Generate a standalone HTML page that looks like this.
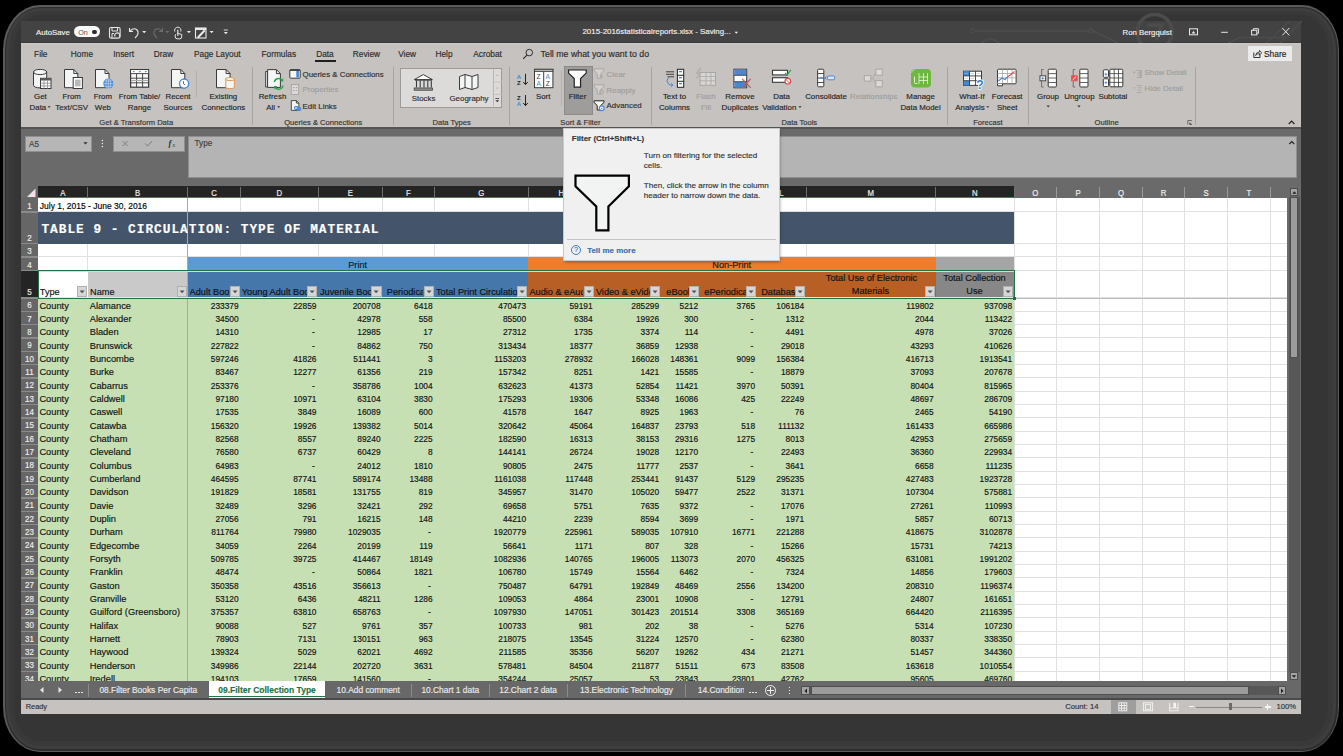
<!DOCTYPE html><html><head><meta charset="utf-8"><style>
html,body{margin:0;padding:0;width:1343px;height:756px;overflow:hidden;background:#000;}
.t{position:absolute;white-space:nowrap;line-height:1;-webkit-text-stroke:0.15px currentColor;}
.r{position:absolute;}
svg.r{overflow:visible}
</style></head><body>
<div class="r" style="left:3px;top:5px;width:1336px;height:747px;border-radius:37px/45px;background:#5a5a5a;"></div>
<div class="r" style="left:4.5px;top:6.5px;width:1333px;height:744px;border-radius:35.5px/43.5px;background:#2e2e2e;"></div>
<div class="r" style="left:6px;top:8px;width:1330px;height:741px;border-radius:34px/42px;background:#3e3e3e;"></div>
<div class="r" style="left:9px;top:11px;width:1324px;height:735px;border-radius:31px/39px;background:#393939;"></div>
<div class="r" style="left:14px;top:15px;width:1314px;height:726px;border-radius:26px/34px;background:#353535;"></div>
<div class="r" style="left:21.00px;top:21.00px;width:1280.00px;height:22.00px;background:#434343;"></div>
<div class="r" style="left:21.00px;top:42.00px;width:1280.00px;height:1.00px;background:#3a3a3a;"></div>
<div class="r" style="left:21.00px;top:43.00px;width:1280.00px;height:85.00px;background:#c5c2bf;"></div>
<div class="r" style="left:21.00px;top:43.00px;width:1280.00px;height:1.00px;background:#ccc9c6;"></div>
<svg class="r" style="left:0;top:0;overflow:hidden" width="1343" height="43" viewBox="0 0 1343 43"><g fill="none" stroke="#4c4c4c" stroke-width="1.4"><path d="M974.5 31 H1089"/><circle cx="972.5" cy="31" r="2"/><circle cx="1091" cy="31" r="2"/><path d="M1093 31 L1118 43"/><circle cx="1154.7" cy="32" r="17.5" stroke-width="3.6"/><path d="M1147 25 h15 l-6 15" stroke-width="3.5"/><path d="M1228 43 L1240 37.5 H1290"/><path d="M1266 43 L1290 21"/><path d="M1280 43 L1302 21"/><circle cx="990" cy="50" r="11"/></g></svg>
<div class="t" style="top:28.50px;font-size:7.8px;color:#f2f2f2;font-weight:normal;font-family:'Liberation Sans', sans-serif;left:36.00px;">AutoSave</div>
<div class="r" style="left:74px;top:26px;width:26px;height:11px;border-radius:6px;background:#fafafa;"></div>
<div class="t" style="top:28.51px;font-size:7.2px;color:#555;font-weight:normal;font-family:'Liberation Sans', sans-serif;left:78.20px;-webkit-text-stroke:0;">On</div>
<div class="r" style="left:91.9px;top:29.6px;width:4.8px;height:4.8px;border-radius:50%;background:#2a2a2a;"></div>
<div class="t" style="top:28.21px;font-size:7.9px;color:#f0f0f0;font-weight:normal;font-family:'Liberation Sans', sans-serif;left:506.60px;width:300px;text-align:center;">2015-2016statisticalreports.xlsx  -  Saving...</div>
<div class="t" style="top:28.60px;font-size:7.8px;color:#f0f0f0;font-weight:normal;font-family:'Liberation Sans', sans-serif;left:1122.50px;">Ron Bergquist</div>
<div class="t" style="top:49.77px;font-size:8.3px;color:#2b2b2b;font-weight:normal;font-family:'Liberation Sans', sans-serif;left:0.75px;width:80px;text-align:center;">File</div>
<div class="t" style="top:49.77px;font-size:8.3px;color:#2b2b2b;font-weight:normal;font-family:'Liberation Sans', sans-serif;left:41.95px;width:80px;text-align:center;">Home</div>
<div class="t" style="top:49.77px;font-size:8.3px;color:#2b2b2b;font-weight:normal;font-family:'Liberation Sans', sans-serif;left:83.65px;width:80px;text-align:center;">Insert</div>
<div class="t" style="top:49.77px;font-size:8.3px;color:#2b2b2b;font-weight:normal;font-family:'Liberation Sans', sans-serif;left:123.55px;width:80px;text-align:center;">Draw</div>
<div class="t" style="top:49.77px;font-size:8.3px;color:#2b2b2b;font-weight:normal;font-family:'Liberation Sans', sans-serif;left:177.30px;width:80px;text-align:center;">Page Layout</div>
<div class="t" style="top:49.77px;font-size:8.3px;color:#2b2b2b;font-weight:normal;font-family:'Liberation Sans', sans-serif;left:238.75px;width:80px;text-align:center;">Formulas</div>
<div class="t" style="top:49.77px;font-size:8.3px;color:#2b2b2b;font-weight:normal;font-family:'Liberation Sans', sans-serif;left:284.95px;width:80px;text-align:center;">Data</div>
<div class="t" style="top:49.77px;font-size:8.3px;color:#2b2b2b;font-weight:normal;font-family:'Liberation Sans', sans-serif;left:326.40px;width:80px;text-align:center;">Review</div>
<div class="t" style="top:49.77px;font-size:8.3px;color:#2b2b2b;font-weight:normal;font-family:'Liberation Sans', sans-serif;left:367.15px;width:80px;text-align:center;">View</div>
<div class="t" style="top:49.77px;font-size:8.3px;color:#2b2b2b;font-weight:normal;font-family:'Liberation Sans', sans-serif;left:404.05px;width:80px;text-align:center;">Help</div>
<div class="t" style="top:49.77px;font-size:8.3px;color:#2b2b2b;font-weight:normal;font-family:'Liberation Sans', sans-serif;left:447.60px;width:80px;text-align:center;">Acrobat</div>
<div class="r" style="left:314.50px;top:60.20px;width:21.00px;height:1.80px;background:#1f1f1f;"></div>
<div class="t" style="top:50.15px;font-size:8.8px;color:#2b2b2b;font-weight:normal;font-family:'Liberation Sans', sans-serif;left:540.60px;">Tell me what you want to do</div>
<div class="r" style="left:1248.00px;top:46.30px;width:44.00px;height:14.70px;background:#ebebeb;"></div>
<div class="t" style="top:50.09px;font-size:8.4px;color:#222;font-weight:normal;font-family:'Liberation Sans', sans-serif;left:1264.00px;">Share</div>
<div class="t" style="top:118.87px;font-size:7.6px;color:#333;font-weight:normal;font-family:'Liberation Sans', sans-serif;left:76.25px;width:120px;text-align:center;">Get &amp; Transform Data</div>
<div class="t" style="top:118.87px;font-size:7.6px;color:#333;font-weight:normal;font-family:'Liberation Sans', sans-serif;left:263.25px;width:120px;text-align:center;">Queries &amp; Connections</div>
<div class="t" style="top:118.87px;font-size:7.6px;color:#333;font-weight:normal;font-family:'Liberation Sans', sans-serif;left:391.65px;width:120px;text-align:center;">Data Types</div>
<div class="t" style="top:118.87px;font-size:7.6px;color:#333;font-weight:normal;font-family:'Liberation Sans', sans-serif;left:520.40px;width:120px;text-align:center;">Sort &amp; Filter</div>
<div class="t" style="top:118.87px;font-size:7.6px;color:#333;font-weight:normal;font-family:'Liberation Sans', sans-serif;left:739.30px;width:120px;text-align:center;">Data Tools</div>
<div class="t" style="top:118.87px;font-size:7.6px;color:#333;font-weight:normal;font-family:'Liberation Sans', sans-serif;left:927.95px;width:120px;text-align:center;">Forecast</div>
<div class="t" style="top:118.87px;font-size:7.6px;color:#333;font-weight:normal;font-family:'Liberation Sans', sans-serif;left:1046.60px;width:120px;text-align:center;">Outline</div>
<div class="r" style="left:251.80px;top:66.50px;width:1.00px;height:58.00px;background:#a8a5a2;"></div>
<div class="r" style="left:393.30px;top:66.50px;width:1.00px;height:58.00px;background:#a8a5a2;"></div>
<div class="r" style="left:508.90px;top:66.50px;width:1.00px;height:58.00px;background:#a8a5a2;"></div>
<div class="r" style="left:650.80px;top:66.50px;width:1.00px;height:58.00px;background:#a8a5a2;"></div>
<div class="r" style="left:947.20px;top:66.50px;width:1.00px;height:58.00px;background:#a8a5a2;"></div>
<div class="r" style="left:1027.90px;top:66.50px;width:1.00px;height:58.00px;background:#a8a5a2;"></div>
<div class="r" style="left:1195.00px;top:66.50px;width:1.00px;height:58.00px;background:#a8a5a2;"></div>
<div class="r" style="left:196.10px;top:70.70px;width:1.00px;height:26.80px;background:#b3b0ad;"></div>
<div class="r" style="left:560.50px;top:71.00px;width:1.00px;height:35.00px;background:#b3b0ad;"></div>
<div class="t" style="top:92.91px;font-size:7.9px;color:#262626;font-weight:normal;font-family:'Liberation Sans', sans-serif;left:0.40px;width:80px;text-align:center;">Get</div>
<div class="t" style="top:103.61px;font-size:7.9px;color:#262626;font-weight:normal;font-family:'Liberation Sans', sans-serif;left:-2.10px;width:80px;text-align:center;">Data</div>
<div class="t" style="top:92.91px;font-size:7.9px;color:#262626;font-weight:normal;font-family:'Liberation Sans', sans-serif;left:31.70px;width:80px;text-align:center;">From</div>
<div class="t" style="top:103.61px;font-size:7.9px;color:#262626;font-weight:normal;font-family:'Liberation Sans', sans-serif;left:31.70px;width:80px;text-align:center;">Text/CSV</div>
<div class="t" style="top:92.91px;font-size:7.9px;color:#262626;font-weight:normal;font-family:'Liberation Sans', sans-serif;left:62.90px;width:80px;text-align:center;">From</div>
<div class="t" style="top:103.61px;font-size:7.9px;color:#262626;font-weight:normal;font-family:'Liberation Sans', sans-serif;left:62.90px;width:80px;text-align:center;">Web</div>
<div class="t" style="top:92.91px;font-size:7.9px;color:#262626;font-weight:normal;font-family:'Liberation Sans', sans-serif;left:99.50px;width:80px;text-align:center;">From Table/</div>
<div class="t" style="top:103.61px;font-size:7.9px;color:#262626;font-weight:normal;font-family:'Liberation Sans', sans-serif;left:99.50px;width:80px;text-align:center;">Range</div>
<div class="t" style="top:92.91px;font-size:7.9px;color:#262626;font-weight:normal;font-family:'Liberation Sans', sans-serif;left:138.00px;width:80px;text-align:center;">Recent</div>
<div class="t" style="top:103.61px;font-size:7.9px;color:#262626;font-weight:normal;font-family:'Liberation Sans', sans-serif;left:138.00px;width:80px;text-align:center;">Sources</div>
<div class="t" style="top:92.91px;font-size:7.9px;color:#262626;font-weight:normal;font-family:'Liberation Sans', sans-serif;left:183.40px;width:80px;text-align:center;">Existing</div>
<div class="t" style="top:103.61px;font-size:7.9px;color:#262626;font-weight:normal;font-family:'Liberation Sans', sans-serif;left:183.40px;width:80px;text-align:center;">Connections</div>
<div class="t" style="top:92.91px;font-size:7.9px;color:#262626;font-weight:normal;font-family:'Liberation Sans', sans-serif;left:232.50px;width:80px;text-align:center;">Refresh</div>
<div class="t" style="top:103.61px;font-size:7.9px;color:#262626;font-weight:normal;font-family:'Liberation Sans', sans-serif;left:230.60px;width:80px;text-align:center;">All</div>
<div class="t" style="top:70.71px;font-size:7.9px;color:#2e2e2e;font-weight:normal;font-family:'Liberation Sans', sans-serif;left:302.50px;">Queries &amp; Connections</div>
<div class="t" style="top:86.41px;font-size:7.9px;color:#a09e9c;font-weight:normal;font-family:'Liberation Sans', sans-serif;left:302.50px;">Properties</div>
<div class="t" style="top:102.81px;font-size:7.9px;color:#2e2e2e;font-weight:normal;font-family:'Liberation Sans', sans-serif;left:302.50px;">Edit Links</div>
<div class="r" style="left:400px;top:67.7px;width:100px;height:38.7px;background:#dcdbda;border:1px solid #9c9a98;"></div>
<div class="r" style="left:492.50px;top:68.70px;width:1.00px;height:37.70px;background:#b9b7b5;"></div>
<div class="t" style="top:95.21px;font-size:7.9px;color:#2e2e2e;font-weight:normal;font-family:'Liberation Sans', sans-serif;left:393.60px;width:60px;text-align:center;">Stocks</div>
<div class="t" style="top:95.21px;font-size:7.9px;color:#2e2e2e;font-weight:normal;font-family:'Liberation Sans', sans-serif;left:439.00px;width:60px;text-align:center;">Geography</div>
<div class="t" style="top:92.91px;font-size:7.9px;color:#262626;font-weight:normal;font-family:'Liberation Sans', sans-serif;left:503.20px;width:80px;text-align:center;">Sort</div>
<div class="r" style="left:563.7px;top:65.6px;width:27.2px;height:47.7px;background:#9f9d9b;border:1px solid #8d8b89;"></div>
<div class="t" style="top:92.91px;font-size:7.9px;color:#262626;font-weight:normal;font-family:'Liberation Sans', sans-serif;left:537.50px;width:80px;text-align:center;">Filter</div>
<div class="t" style="top:70.71px;font-size:7.9px;color:#a09e9c;font-weight:normal;font-family:'Liberation Sans', sans-serif;left:606.60px;">Clear</div>
<div class="t" style="top:86.71px;font-size:7.9px;color:#a09e9c;font-weight:normal;font-family:'Liberation Sans', sans-serif;left:606.60px;">Reapply</div>
<div class="t" style="top:102.41px;font-size:7.9px;color:#2e2e2e;font-weight:normal;font-family:'Liberation Sans', sans-serif;left:606.60px;">Advanced</div>
<div class="t" style="top:92.91px;font-size:7.9px;color:#262626;font-weight:normal;font-family:'Liberation Sans', sans-serif;left:634.50px;width:80px;text-align:center;">Text to</div>
<div class="t" style="top:103.61px;font-size:7.9px;color:#262626;font-weight:normal;font-family:'Liberation Sans', sans-serif;left:634.50px;width:80px;text-align:center;">Columns</div>
<div class="t" style="top:92.91px;font-size:7.9px;color:#a09e9c;font-weight:normal;font-family:'Liberation Sans', sans-serif;left:666.00px;width:80px;text-align:center;">Flash</div>
<div class="t" style="top:103.61px;font-size:7.9px;color:#a09e9c;font-weight:normal;font-family:'Liberation Sans', sans-serif;left:666.00px;width:80px;text-align:center;">Fill</div>
<div class="t" style="top:92.91px;font-size:7.9px;color:#262626;font-weight:normal;font-family:'Liberation Sans', sans-serif;left:700.00px;width:80px;text-align:center;">Remove</div>
<div class="t" style="top:103.61px;font-size:7.9px;color:#262626;font-weight:normal;font-family:'Liberation Sans', sans-serif;left:700.00px;width:80px;text-align:center;">Duplicates</div>
<div class="t" style="top:92.91px;font-size:7.9px;color:#262626;font-weight:normal;font-family:'Liberation Sans', sans-serif;left:741.60px;width:80px;text-align:center;">Data</div>
<div class="t" style="top:103.61px;font-size:7.9px;color:#262626;font-weight:normal;font-family:'Liberation Sans', sans-serif;left:739.30px;width:80px;text-align:center;">Validation</div>
<div class="t" style="top:92.91px;font-size:7.9px;color:#262626;font-weight:normal;font-family:'Liberation Sans', sans-serif;left:786.00px;width:80px;text-align:center;">Consolidate</div>
<div class="t" style="top:92.91px;font-size:7.9px;color:#a09e9c;font-weight:normal;font-family:'Liberation Sans', sans-serif;left:833.80px;width:80px;text-align:center;">Relationships</div>
<div class="t" style="top:92.91px;font-size:7.9px;color:#262626;font-weight:normal;font-family:'Liberation Sans', sans-serif;left:880.60px;width:80px;text-align:center;">Manage</div>
<div class="t" style="top:103.61px;font-size:7.9px;color:#262626;font-weight:normal;font-family:'Liberation Sans', sans-serif;left:880.60px;width:80px;text-align:center;">Data Model</div>
<div class="t" style="top:92.91px;font-size:7.9px;color:#262626;font-weight:normal;font-family:'Liberation Sans', sans-serif;left:932.00px;width:80px;text-align:center;">What-If</div>
<div class="t" style="top:103.61px;font-size:7.9px;color:#262626;font-weight:normal;font-family:'Liberation Sans', sans-serif;left:930.00px;width:80px;text-align:center;">Analysis</div>
<div class="t" style="top:92.91px;font-size:7.9px;color:#262626;font-weight:normal;font-family:'Liberation Sans', sans-serif;left:967.20px;width:80px;text-align:center;">Forecast</div>
<div class="t" style="top:103.61px;font-size:7.9px;color:#262626;font-weight:normal;font-family:'Liberation Sans', sans-serif;left:967.20px;width:80px;text-align:center;">Sheet</div>
<div class="t" style="top:92.91px;font-size:7.9px;color:#262626;font-weight:normal;font-family:'Liberation Sans', sans-serif;left:1008.00px;width:80px;text-align:center;">Group</div>
<div class="t" style="top:92.91px;font-size:7.9px;color:#262626;font-weight:normal;font-family:'Liberation Sans', sans-serif;left:1039.40px;width:80px;text-align:center;">Ungroup</div>
<div class="t" style="top:92.91px;font-size:7.9px;color:#262626;font-weight:normal;font-family:'Liberation Sans', sans-serif;left:1072.90px;width:80px;text-align:center;">Subtotal</div>
<div class="t" style="top:69.41px;font-size:7.9px;color:#a09e9c;font-weight:normal;font-family:'Liberation Sans', sans-serif;left:1144.50px;">Show Detail</div>
<div class="t" style="top:84.81px;font-size:7.9px;color:#a09e9c;font-weight:normal;font-family:'Liberation Sans', sans-serif;left:1144.50px;">Hide Detail</div>
<div class="r" style="left:21.00px;top:128.00px;width:1280.00px;height:58.00px;background:#6a6a6a;"></div>
<div class="r" style="left:21.00px;top:127.40px;width:1280.00px;height:1.60px;background:#555;"></div>
<div class="r" style="left:24.7px;top:135.8px;width:67.3px;height:16.4px;background:#b6b6b6;box-sizing:border-box;border:1px solid #8f8f8f;"></div>
<div class="t" style="top:140.86px;font-size:8.2px;color:#404040;font-weight:normal;font-family:'Liberation Sans', sans-serif;left:29.00px;">A5</div>
<div class="r" style="left:112.5px;top:135.8px;width:72.6px;height:16.4px;background:#b6b6b6;box-sizing:border-box;border:1px solid #8f8f8f;"></div>
<div class="r" style="left:188.2px;top:135.8px;width:1109.2px;height:42.6px;background:#b4b4b4;box-sizing:border-box;border:1px solid #8f8f8f;"></div>
<div class="t" style="top:140.26px;font-size:8.2px;color:#404040;font-weight:normal;font-family:'Liberation Sans', sans-serif;left:194.50px;">Type</div>
<div class="r" style="left:21.00px;top:186.00px;width:1265.50px;height:12.00px;background:#6a6a6a;"></div>
<div class="r" style="left:21.00px;top:186.00px;width:17.00px;height:12.00px;background:#6a6a6a;"></div>
<svg class="r" style="left:23px;top:187px;" width="14" height="11" viewBox="0 0 14 11"><path d="M12.5 1.5 L12.5 10 L4 10 Z" fill="#e6e6e6"/></svg>
<div class="r" style="left:38.00px;top:186.00px;width:976.00px;height:12.00px;background:#242424;"></div>
<div class="t" style="top:189.60px;font-size:7.8px;color:#f0f0f0;font-weight:normal;font-family:'Liberation Sans', sans-serif;left:42.75px;width:40px;text-align:center;transform:scaleY(1.2);transform-origin:50% 6.6px;">A</div>
<div class="r" style="left:87.00px;top:187.00px;width:1.00px;height:11.00px;background:#6f6f6f;"></div>
<div class="t" style="top:189.60px;font-size:7.8px;color:#f0f0f0;font-weight:normal;font-family:'Liberation Sans', sans-serif;left:117.50px;width:40px;text-align:center;transform:scaleY(1.2);transform-origin:50% 6.6px;">B</div>
<div class="r" style="left:187.00px;top:187.00px;width:1.00px;height:11.00px;background:#6f6f6f;"></div>
<div class="t" style="top:189.60px;font-size:7.8px;color:#f0f0f0;font-weight:normal;font-family:'Liberation Sans', sans-serif;left:194.00px;width:40px;text-align:center;transform:scaleY(1.2);transform-origin:50% 6.6px;">C</div>
<div class="r" style="left:240.00px;top:187.00px;width:1.00px;height:11.00px;background:#6f6f6f;"></div>
<div class="t" style="top:189.60px;font-size:7.8px;color:#f0f0f0;font-weight:normal;font-family:'Liberation Sans', sans-serif;left:259.40px;width:40px;text-align:center;transform:scaleY(1.2);transform-origin:50% 6.6px;">D</div>
<div class="r" style="left:317.80px;top:187.00px;width:1.00px;height:11.00px;background:#6f6f6f;"></div>
<div class="t" style="top:189.60px;font-size:7.8px;color:#f0f0f0;font-weight:normal;font-family:'Liberation Sans', sans-serif;left:330.35px;width:40px;text-align:center;transform:scaleY(1.2);transform-origin:50% 6.6px;">E</div>
<div class="r" style="left:381.90px;top:187.00px;width:1.00px;height:11.00px;background:#6f6f6f;"></div>
<div class="t" style="top:189.60px;font-size:7.8px;color:#f0f0f0;font-weight:normal;font-family:'Liberation Sans', sans-serif;left:388.45px;width:40px;text-align:center;transform:scaleY(1.2);transform-origin:50% 6.6px;">F</div>
<div class="r" style="left:434.00px;top:187.00px;width:1.00px;height:11.00px;background:#6f6f6f;"></div>
<div class="t" style="top:189.60px;font-size:7.8px;color:#f0f0f0;font-weight:normal;font-family:'Liberation Sans', sans-serif;left:461.25px;width:40px;text-align:center;transform:scaleY(1.2);transform-origin:50% 6.6px;">G</div>
<div class="r" style="left:527.50px;top:187.00px;width:1.00px;height:11.00px;background:#6f6f6f;"></div>
<div class="t" style="top:189.60px;font-size:7.8px;color:#f0f0f0;font-weight:normal;font-family:'Liberation Sans', sans-serif;left:541.25px;width:40px;text-align:center;transform:scaleY(1.2);transform-origin:50% 6.6px;">H</div>
<div class="r" style="left:594.00px;top:187.00px;width:1.00px;height:11.00px;background:#6f6f6f;"></div>
<div class="t" style="top:189.60px;font-size:7.8px;color:#f0f0f0;font-weight:normal;font-family:'Liberation Sans', sans-serif;left:607.75px;width:40px;text-align:center;transform:scaleY(1.2);transform-origin:50% 6.6px;">I</div>
<div class="r" style="left:660.50px;top:187.00px;width:1.00px;height:11.00px;background:#6f6f6f;"></div>
<div class="t" style="top:189.60px;font-size:7.8px;color:#f0f0f0;font-weight:normal;font-family:'Liberation Sans', sans-serif;left:660.50px;width:40px;text-align:center;transform:scaleY(1.2);transform-origin:50% 6.6px;">J</div>
<div class="r" style="left:699.50px;top:187.00px;width:1.00px;height:11.00px;background:#6f6f6f;"></div>
<div class="t" style="top:189.60px;font-size:7.8px;color:#f0f0f0;font-weight:normal;font-family:'Liberation Sans', sans-serif;left:708.50px;width:40px;text-align:center;transform:scaleY(1.2);transform-origin:50% 6.6px;">K</div>
<div class="r" style="left:756.50px;top:187.00px;width:1.00px;height:11.00px;background:#6f6f6f;"></div>
<div class="t" style="top:189.60px;font-size:7.8px;color:#f0f0f0;font-weight:normal;font-family:'Liberation Sans', sans-serif;left:761.50px;width:40px;text-align:center;transform:scaleY(1.2);transform-origin:50% 6.6px;">L</div>
<div class="r" style="left:805.50px;top:187.00px;width:1.00px;height:11.00px;background:#6f6f6f;"></div>
<div class="t" style="top:189.60px;font-size:7.8px;color:#f0f0f0;font-weight:normal;font-family:'Liberation Sans', sans-serif;left:850.75px;width:40px;text-align:center;transform:scaleY(1.2);transform-origin:50% 6.6px;">M</div>
<div class="r" style="left:935.00px;top:187.00px;width:1.00px;height:11.00px;background:#6f6f6f;"></div>
<div class="t" style="top:189.60px;font-size:7.8px;color:#f0f0f0;font-weight:normal;font-family:'Liberation Sans', sans-serif;left:954.75px;width:40px;text-align:center;transform:scaleY(1.2);transform-origin:50% 6.6px;">N</div>
<div class="r" style="left:1013.50px;top:187.00px;width:1.00px;height:11.00px;background:#6f6f6f;"></div>
<div class="t" style="top:189.60px;font-size:7.8px;color:#f0f0f0;font-weight:normal;font-family:'Liberation Sans', sans-serif;left:1015.25px;width:40px;text-align:center;transform:scaleY(1.2);transform-origin:50% 6.6px;">O</div>
<div class="r" style="left:1056.00px;top:187.00px;width:1.00px;height:11.00px;background:#9a9a9a;"></div>
<div class="t" style="top:189.60px;font-size:7.8px;color:#f0f0f0;font-weight:normal;font-family:'Liberation Sans', sans-serif;left:1058.15px;width:40px;text-align:center;transform:scaleY(1.2);transform-origin:50% 6.6px;">P</div>
<div class="r" style="left:1099.30px;top:187.00px;width:1.00px;height:11.00px;background:#9a9a9a;"></div>
<div class="t" style="top:189.60px;font-size:7.8px;color:#f0f0f0;font-weight:normal;font-family:'Liberation Sans', sans-serif;left:1101.10px;width:40px;text-align:center;transform:scaleY(1.2);transform-origin:50% 6.6px;">Q</div>
<div class="r" style="left:1141.90px;top:187.00px;width:1.00px;height:11.00px;background:#9a9a9a;"></div>
<div class="t" style="top:189.60px;font-size:7.8px;color:#f0f0f0;font-weight:normal;font-family:'Liberation Sans', sans-serif;left:1143.50px;width:40px;text-align:center;transform:scaleY(1.2);transform-origin:50% 6.6px;">R</div>
<div class="r" style="left:1184.10px;top:187.00px;width:1.00px;height:11.00px;background:#9a9a9a;"></div>
<div class="t" style="top:189.60px;font-size:7.8px;color:#f0f0f0;font-weight:normal;font-family:'Liberation Sans', sans-serif;left:1186.05px;width:40px;text-align:center;transform:scaleY(1.2);transform-origin:50% 6.6px;">S</div>
<div class="r" style="left:1227.00px;top:187.00px;width:1.00px;height:11.00px;background:#9a9a9a;"></div>
<div class="t" style="top:189.60px;font-size:7.8px;color:#f0f0f0;font-weight:normal;font-family:'Liberation Sans', sans-serif;left:1228.90px;width:40px;text-align:center;transform:scaleY(1.2);transform-origin:50% 6.6px;">T</div>
<div class="r" style="left:1269.80px;top:187.00px;width:1.00px;height:11.00px;background:#9a9a9a;"></div>
<div class="t" style="top:189.60px;font-size:7.8px;color:#f0f0f0;font-weight:normal;font-family:'Liberation Sans', sans-serif;left:1271.65px;width:40px;text-align:center;transform:scaleY(1.2);transform-origin:50% 6.6px;">U</div>
<div class="r" style="left:38.00px;top:197.00px;width:976.00px;height:1.60px;background:#2e8b57;"></div>
<div class="r" style="left:21.00px;top:198.00px;width:17.00px;height:483.00px;background:#666666;"></div>
<div class="r" style="left:21.00px;top:211.40px;width:16.50px;height:1.20px;background:#8a8a8a;"></div>
<div class="t" style="top:203.03px;font-size:8px;color:#ececec;font-weight:normal;font-family:'Liberation Sans', sans-serif;left:19.50px;width:20px;text-align:center;transform:scaleY(1.2);transform-origin:50% 6.8px;">1</div>
<div class="r" style="left:21.00px;top:243.00px;width:16.50px;height:1.20px;background:#8a8a8a;"></div>
<div class="t" style="top:234.63px;font-size:8px;color:#ececec;font-weight:normal;font-family:'Liberation Sans', sans-serif;left:19.50px;width:20px;text-align:center;transform:scaleY(1.2);transform-origin:50% 6.8px;">2</div>
<div class="r" style="left:21.00px;top:256.40px;width:16.50px;height:1.20px;background:#8a8a8a;"></div>
<div class="t" style="top:248.03px;font-size:8px;color:#ececec;font-weight:normal;font-family:'Liberation Sans', sans-serif;left:19.50px;width:20px;text-align:center;transform:scaleY(1.2);transform-origin:50% 6.8px;">3</div>
<div class="r" style="left:21.00px;top:270.00px;width:16.50px;height:1.20px;background:#8a8a8a;"></div>
<div class="t" style="top:261.63px;font-size:8px;color:#ececec;font-weight:normal;font-family:'Liberation Sans', sans-serif;left:19.50px;width:20px;text-align:center;transform:scaleY(1.2);transform-origin:50% 6.8px;">4</div>
<div class="r" style="left:21.00px;top:270.60px;width:16.50px;height:27.40px;background:#242424;"></div>
<div class="r" style="left:21.00px;top:297.40px;width:16.50px;height:1.20px;background:#8a8a8a;"></div>
<div class="t" style="top:289.03px;font-size:8px;color:#ececec;font-weight:normal;font-family:'Liberation Sans', sans-serif;left:19.50px;width:20px;text-align:center;transform:scaleY(1.2);transform-origin:50% 6.8px;">5</div>
<div class="r" style="left:21.00px;top:310.73px;width:16.50px;height:1.20px;background:#8a8a8a;"></div>
<div class="t" style="top:302.36px;font-size:8px;color:#ececec;font-weight:normal;font-family:'Liberation Sans', sans-serif;left:19.50px;width:20px;text-align:center;transform:scaleY(1.2);transform-origin:50% 6.8px;">6</div>
<div class="r" style="left:21.00px;top:324.07px;width:16.50px;height:1.20px;background:#8a8a8a;"></div>
<div class="t" style="top:315.69px;font-size:8px;color:#ececec;font-weight:normal;font-family:'Liberation Sans', sans-serif;left:19.50px;width:20px;text-align:center;transform:scaleY(1.2);transform-origin:50% 6.8px;">7</div>
<div class="r" style="left:21.00px;top:337.40px;width:16.50px;height:1.20px;background:#8a8a8a;"></div>
<div class="t" style="top:329.03px;font-size:8px;color:#ececec;font-weight:normal;font-family:'Liberation Sans', sans-serif;left:19.50px;width:20px;text-align:center;transform:scaleY(1.2);transform-origin:50% 6.8px;">8</div>
<div class="r" style="left:21.00px;top:350.73px;width:16.50px;height:1.20px;background:#8a8a8a;"></div>
<div class="t" style="top:342.36px;font-size:8px;color:#ececec;font-weight:normal;font-family:'Liberation Sans', sans-serif;left:19.50px;width:20px;text-align:center;transform:scaleY(1.2);transform-origin:50% 6.8px;">9</div>
<div class="r" style="left:21.00px;top:364.06px;width:16.50px;height:1.20px;background:#8a8a8a;"></div>
<div class="t" style="top:355.69px;font-size:8px;color:#ececec;font-weight:normal;font-family:'Liberation Sans', sans-serif;left:19.50px;width:20px;text-align:center;transform:scaleY(1.2);transform-origin:50% 6.8px;">10</div>
<div class="r" style="left:21.00px;top:377.40px;width:16.50px;height:1.20px;background:#8a8a8a;"></div>
<div class="t" style="top:369.03px;font-size:8px;color:#ececec;font-weight:normal;font-family:'Liberation Sans', sans-serif;left:19.50px;width:20px;text-align:center;transform:scaleY(1.2);transform-origin:50% 6.8px;">11</div>
<div class="r" style="left:21.00px;top:390.73px;width:16.50px;height:1.20px;background:#8a8a8a;"></div>
<div class="t" style="top:382.36px;font-size:8px;color:#ececec;font-weight:normal;font-family:'Liberation Sans', sans-serif;left:19.50px;width:20px;text-align:center;transform:scaleY(1.2);transform-origin:50% 6.8px;">12</div>
<div class="r" style="left:21.00px;top:404.06px;width:16.50px;height:1.20px;background:#8a8a8a;"></div>
<div class="t" style="top:395.69px;font-size:8px;color:#ececec;font-weight:normal;font-family:'Liberation Sans', sans-serif;left:19.50px;width:20px;text-align:center;transform:scaleY(1.2);transform-origin:50% 6.8px;">13</div>
<div class="r" style="left:21.00px;top:417.40px;width:16.50px;height:1.20px;background:#8a8a8a;"></div>
<div class="t" style="top:409.03px;font-size:8px;color:#ececec;font-weight:normal;font-family:'Liberation Sans', sans-serif;left:19.50px;width:20px;text-align:center;transform:scaleY(1.2);transform-origin:50% 6.8px;">14</div>
<div class="r" style="left:21.00px;top:430.73px;width:16.50px;height:1.20px;background:#8a8a8a;"></div>
<div class="t" style="top:422.36px;font-size:8px;color:#ececec;font-weight:normal;font-family:'Liberation Sans', sans-serif;left:19.50px;width:20px;text-align:center;transform:scaleY(1.2);transform-origin:50% 6.8px;">15</div>
<div class="r" style="left:21.00px;top:444.06px;width:16.50px;height:1.20px;background:#8a8a8a;"></div>
<div class="t" style="top:435.69px;font-size:8px;color:#ececec;font-weight:normal;font-family:'Liberation Sans', sans-serif;left:19.50px;width:20px;text-align:center;transform:scaleY(1.2);transform-origin:50% 6.8px;">16</div>
<div class="r" style="left:21.00px;top:457.40px;width:16.50px;height:1.20px;background:#8a8a8a;"></div>
<div class="t" style="top:449.02px;font-size:8px;color:#ececec;font-weight:normal;font-family:'Liberation Sans', sans-serif;left:19.50px;width:20px;text-align:center;transform:scaleY(1.2);transform-origin:50% 6.8px;">17</div>
<div class="r" style="left:21.00px;top:470.73px;width:16.50px;height:1.20px;background:#8a8a8a;"></div>
<div class="t" style="top:462.36px;font-size:8px;color:#ececec;font-weight:normal;font-family:'Liberation Sans', sans-serif;left:19.50px;width:20px;text-align:center;transform:scaleY(1.2);transform-origin:50% 6.8px;">18</div>
<div class="r" style="left:21.00px;top:484.06px;width:16.50px;height:1.20px;background:#8a8a8a;"></div>
<div class="t" style="top:475.69px;font-size:8px;color:#ececec;font-weight:normal;font-family:'Liberation Sans', sans-serif;left:19.50px;width:20px;text-align:center;transform:scaleY(1.2);transform-origin:50% 6.8px;">19</div>
<div class="r" style="left:21.00px;top:497.39px;width:16.50px;height:1.20px;background:#8a8a8a;"></div>
<div class="t" style="top:489.02px;font-size:8px;color:#ececec;font-weight:normal;font-family:'Liberation Sans', sans-serif;left:19.50px;width:20px;text-align:center;transform:scaleY(1.2);transform-origin:50% 6.8px;">20</div>
<div class="r" style="left:21.00px;top:510.73px;width:16.50px;height:1.20px;background:#8a8a8a;"></div>
<div class="t" style="top:502.36px;font-size:8px;color:#ececec;font-weight:normal;font-family:'Liberation Sans', sans-serif;left:19.50px;width:20px;text-align:center;transform:scaleY(1.2);transform-origin:50% 6.8px;">21</div>
<div class="r" style="left:21.00px;top:524.06px;width:16.50px;height:1.20px;background:#8a8a8a;"></div>
<div class="t" style="top:515.69px;font-size:8px;color:#ececec;font-weight:normal;font-family:'Liberation Sans', sans-serif;left:19.50px;width:20px;text-align:center;transform:scaleY(1.2);transform-origin:50% 6.8px;">22</div>
<div class="r" style="left:21.00px;top:537.39px;width:16.50px;height:1.20px;background:#8a8a8a;"></div>
<div class="t" style="top:529.02px;font-size:8px;color:#ececec;font-weight:normal;font-family:'Liberation Sans', sans-serif;left:19.50px;width:20px;text-align:center;transform:scaleY(1.2);transform-origin:50% 6.8px;">23</div>
<div class="r" style="left:21.00px;top:550.73px;width:16.50px;height:1.20px;background:#8a8a8a;"></div>
<div class="t" style="top:542.35px;font-size:8px;color:#ececec;font-weight:normal;font-family:'Liberation Sans', sans-serif;left:19.50px;width:20px;text-align:center;transform:scaleY(1.2);transform-origin:50% 6.8px;">24</div>
<div class="r" style="left:21.00px;top:564.06px;width:16.50px;height:1.20px;background:#8a8a8a;"></div>
<div class="t" style="top:555.69px;font-size:8px;color:#ececec;font-weight:normal;font-family:'Liberation Sans', sans-serif;left:19.50px;width:20px;text-align:center;transform:scaleY(1.2);transform-origin:50% 6.8px;">25</div>
<div class="r" style="left:21.00px;top:577.39px;width:16.50px;height:1.20px;background:#8a8a8a;"></div>
<div class="t" style="top:569.02px;font-size:8px;color:#ececec;font-weight:normal;font-family:'Liberation Sans', sans-serif;left:19.50px;width:20px;text-align:center;transform:scaleY(1.2);transform-origin:50% 6.8px;">26</div>
<div class="r" style="left:21.00px;top:590.73px;width:16.50px;height:1.20px;background:#8a8a8a;"></div>
<div class="t" style="top:582.35px;font-size:8px;color:#ececec;font-weight:normal;font-family:'Liberation Sans', sans-serif;left:19.50px;width:20px;text-align:center;transform:scaleY(1.2);transform-origin:50% 6.8px;">27</div>
<div class="r" style="left:21.00px;top:604.06px;width:16.50px;height:1.20px;background:#8a8a8a;"></div>
<div class="t" style="top:595.69px;font-size:8px;color:#ececec;font-weight:normal;font-family:'Liberation Sans', sans-serif;left:19.50px;width:20px;text-align:center;transform:scaleY(1.2);transform-origin:50% 6.8px;">28</div>
<div class="r" style="left:21.00px;top:617.39px;width:16.50px;height:1.20px;background:#8a8a8a;"></div>
<div class="t" style="top:609.02px;font-size:8px;color:#ececec;font-weight:normal;font-family:'Liberation Sans', sans-serif;left:19.50px;width:20px;text-align:center;transform:scaleY(1.2);transform-origin:50% 6.8px;">29</div>
<div class="r" style="left:21.00px;top:630.73px;width:16.50px;height:1.20px;background:#8a8a8a;"></div>
<div class="t" style="top:622.35px;font-size:8px;color:#ececec;font-weight:normal;font-family:'Liberation Sans', sans-serif;left:19.50px;width:20px;text-align:center;transform:scaleY(1.2);transform-origin:50% 6.8px;">30</div>
<div class="r" style="left:21.00px;top:644.06px;width:16.50px;height:1.20px;background:#8a8a8a;"></div>
<div class="t" style="top:635.69px;font-size:8px;color:#ececec;font-weight:normal;font-family:'Liberation Sans', sans-serif;left:19.50px;width:20px;text-align:center;transform:scaleY(1.2);transform-origin:50% 6.8px;">31</div>
<div class="r" style="left:21.00px;top:657.39px;width:16.50px;height:1.20px;background:#8a8a8a;"></div>
<div class="t" style="top:649.02px;font-size:8px;color:#ececec;font-weight:normal;font-family:'Liberation Sans', sans-serif;left:19.50px;width:20px;text-align:center;transform:scaleY(1.2);transform-origin:50% 6.8px;">32</div>
<div class="r" style="left:21.00px;top:670.72px;width:16.50px;height:1.20px;background:#8a8a8a;"></div>
<div class="t" style="top:662.35px;font-size:8px;color:#ececec;font-weight:normal;font-family:'Liberation Sans', sans-serif;left:19.50px;width:20px;text-align:center;transform:scaleY(1.2);transform-origin:50% 6.8px;">33</div>
<div class="r" style="left:21.00px;top:684.06px;width:16.50px;height:1.20px;background:#8a8a8a;"></div>
<div class="t" style="top:675.68px;font-size:8px;color:#ececec;font-weight:normal;font-family:'Liberation Sans', sans-serif;left:19.50px;width:20px;text-align:center;transform:scaleY(1.2);transform-origin:50% 6.8px;">34</div>
<div class="r" style="left:38px;top:198px;width:1248.5px;height:483px;background:#fff;overflow:hidden;">
<div class="r" style="left:49.00px;top:0.00px;width:1.00px;height:483.00px;background:#e0e0e0;"></div>
<div class="r" style="left:149.00px;top:0.00px;width:1.00px;height:483.00px;background:#e0e0e0;"></div>
<div class="r" style="left:202.00px;top:0.00px;width:1.00px;height:483.00px;background:#e0e0e0;"></div>
<div class="r" style="left:279.80px;top:0.00px;width:1.00px;height:483.00px;background:#e0e0e0;"></div>
<div class="r" style="left:343.90px;top:0.00px;width:1.00px;height:483.00px;background:#e0e0e0;"></div>
<div class="r" style="left:396.00px;top:0.00px;width:1.00px;height:483.00px;background:#e0e0e0;"></div>
<div class="r" style="left:489.50px;top:0.00px;width:1.00px;height:483.00px;background:#e0e0e0;"></div>
<div class="r" style="left:556.00px;top:0.00px;width:1.00px;height:483.00px;background:#e0e0e0;"></div>
<div class="r" style="left:622.50px;top:0.00px;width:1.00px;height:483.00px;background:#e0e0e0;"></div>
<div class="r" style="left:661.50px;top:0.00px;width:1.00px;height:483.00px;background:#e0e0e0;"></div>
<div class="r" style="left:718.50px;top:0.00px;width:1.00px;height:483.00px;background:#e0e0e0;"></div>
<div class="r" style="left:767.50px;top:0.00px;width:1.00px;height:483.00px;background:#e0e0e0;"></div>
<div class="r" style="left:897.00px;top:0.00px;width:1.00px;height:483.00px;background:#e0e0e0;"></div>
<div class="r" style="left:975.50px;top:0.00px;width:1.00px;height:483.00px;background:#e0e0e0;"></div>
<div class="r" style="left:1018.00px;top:0.00px;width:1.00px;height:483.00px;background:#e0e0e0;"></div>
<div class="r" style="left:1061.30px;top:0.00px;width:1.00px;height:483.00px;background:#e0e0e0;"></div>
<div class="r" style="left:1103.90px;top:0.00px;width:1.00px;height:483.00px;background:#e0e0e0;"></div>
<div class="r" style="left:1146.10px;top:0.00px;width:1.00px;height:483.00px;background:#e0e0e0;"></div>
<div class="r" style="left:1189.00px;top:0.00px;width:1.00px;height:483.00px;background:#e0e0e0;"></div>
<div class="r" style="left:1231.80px;top:0.00px;width:1.00px;height:483.00px;background:#e0e0e0;"></div>
<div class="r" style="left:1274.50px;top:0.00px;width:1.00px;height:483.00px;background:#e0e0e0;"></div>
<div class="r" style="left:0.00px;top:13.25px;width:1248.50px;height:1.00px;background:#e0e0e0;"></div>
<div class="r" style="left:0.00px;top:44.85px;width:1248.50px;height:1.00px;background:#e0e0e0;"></div>
<div class="r" style="left:0.00px;top:58.25px;width:1248.50px;height:1.00px;background:#e0e0e0;"></div>
<div class="r" style="left:0.00px;top:71.85px;width:1248.50px;height:1.00px;background:#e0e0e0;"></div>
<div class="r" style="left:0.00px;top:99.25px;width:1248.50px;height:1.00px;background:#e0e0e0;"></div>
<div class="r" style="left:0.00px;top:112.58px;width:1248.50px;height:1.00px;background:#e0e0e0;"></div>
<div class="r" style="left:0.00px;top:125.92px;width:1248.50px;height:1.00px;background:#e0e0e0;"></div>
<div class="r" style="left:0.00px;top:139.25px;width:1248.50px;height:1.00px;background:#e0e0e0;"></div>
<div class="r" style="left:0.00px;top:152.58px;width:1248.50px;height:1.00px;background:#e0e0e0;"></div>
<div class="r" style="left:0.00px;top:165.92px;width:1248.50px;height:1.00px;background:#e0e0e0;"></div>
<div class="r" style="left:0.00px;top:179.25px;width:1248.50px;height:1.00px;background:#e0e0e0;"></div>
<div class="r" style="left:0.00px;top:192.58px;width:1248.50px;height:1.00px;background:#e0e0e0;"></div>
<div class="r" style="left:0.00px;top:205.91px;width:1248.50px;height:1.00px;background:#e0e0e0;"></div>
<div class="r" style="left:0.00px;top:219.25px;width:1248.50px;height:1.00px;background:#e0e0e0;"></div>
<div class="r" style="left:0.00px;top:232.58px;width:1248.50px;height:1.00px;background:#e0e0e0;"></div>
<div class="r" style="left:0.00px;top:245.91px;width:1248.50px;height:1.00px;background:#e0e0e0;"></div>
<div class="r" style="left:0.00px;top:259.25px;width:1248.50px;height:1.00px;background:#e0e0e0;"></div>
<div class="r" style="left:0.00px;top:272.58px;width:1248.50px;height:1.00px;background:#e0e0e0;"></div>
<div class="r" style="left:0.00px;top:285.91px;width:1248.50px;height:1.00px;background:#e0e0e0;"></div>
<div class="r" style="left:0.00px;top:299.25px;width:1248.50px;height:1.00px;background:#e0e0e0;"></div>
<div class="r" style="left:0.00px;top:312.58px;width:1248.50px;height:1.00px;background:#e0e0e0;"></div>
<div class="r" style="left:0.00px;top:325.91px;width:1248.50px;height:1.00px;background:#e0e0e0;"></div>
<div class="r" style="left:0.00px;top:339.24px;width:1248.50px;height:1.00px;background:#e0e0e0;"></div>
<div class="r" style="left:0.00px;top:352.58px;width:1248.50px;height:1.00px;background:#e0e0e0;"></div>
<div class="r" style="left:0.00px;top:365.91px;width:1248.50px;height:1.00px;background:#e0e0e0;"></div>
<div class="r" style="left:0.00px;top:379.24px;width:1248.50px;height:1.00px;background:#e0e0e0;"></div>
<div class="r" style="left:0.00px;top:392.58px;width:1248.50px;height:1.00px;background:#e0e0e0;"></div>
<div class="r" style="left:0.00px;top:405.91px;width:1248.50px;height:1.00px;background:#e0e0e0;"></div>
<div class="r" style="left:0.00px;top:419.24px;width:1248.50px;height:1.00px;background:#e0e0e0;"></div>
<div class="r" style="left:0.00px;top:432.58px;width:1248.50px;height:1.00px;background:#e0e0e0;"></div>
<div class="r" style="left:0.00px;top:445.91px;width:1248.50px;height:1.00px;background:#e0e0e0;"></div>
<div class="r" style="left:0.00px;top:459.24px;width:1248.50px;height:1.00px;background:#e0e0e0;"></div>
<div class="r" style="left:0.00px;top:472.57px;width:1248.50px;height:1.00px;background:#e0e0e0;"></div>
<div class="r" style="left:0.00px;top:14.40px;width:976.00px;height:31.20px;background:#44546a;"></div>
<div class="r" style="left:149.50px;top:59.30px;width:340.50px;height:13.20px;background:#5b9bd5;"></div>
<div class="r" style="left:490.00px;top:59.30px;width:407.50px;height:13.20px;background:#ed7d31;"></div>
<div class="r" style="left:897.50px;top:59.30px;width:78.50px;height:13.20px;background:#a5a5a5;"></div>
<div class="r" style="left:0.00px;top:72.50px;width:976.00px;height:27.50px;background:#ffffff;"></div>
<div class="r" style="left:50.00px;top:74.40px;width:99.50px;height:24.60px;background:#c9c9c9;"></div>
<div class="r" style="left:149.50px;top:74.40px;width:340.50px;height:24.60px;background:#4677ab;"></div>
<div class="r" style="left:490.00px;top:74.40px;width:407.50px;height:24.60px;background:#b85f25;"></div>
<div class="r" style="left:897.50px;top:74.40px;width:78.50px;height:24.60px;background:#878787;"></div>
<div class="r" style="left:0.00px;top:100.50px;width:976.00px;height:382.50px;background:#c6e0b4;"></div>
<div class="r" style="left:149.00px;top:0.00px;width:1.20px;height:483.00px;background:#a9a9a9;"></div>
<div class="r" style="left:0.00px;top:99.60px;width:1248.50px;height:1.40px;background:#bdbdbd;"></div>
<div class="r" style="left:-0.50px;top:72.20px;width:977.30px;height:1.20px;background:#217346;"></div>
<div class="r" style="left:1.00px;top:73.40px;width:974.60px;height:1.00px;background:#d9d9d9;"></div>
<div class="r" style="left:1.00px;top:98.90px;width:974.60px;height:0.90px;background:#e8e8e8;"></div>
<div class="r" style="left:-0.50px;top:99.80px;width:977.30px;height:1.20px;background:#217346;"></div>
<div class="r" style="left:-0.50px;top:72.20px;width:1.30px;height:28.80px;background:#217346;"></div>
<div class="r" style="left:975.60px;top:72.20px;width:1.20px;height:28.80px;background:#217346;"></div>
<div class="r" style="left:974.60px;top:98.60px;width:3.80px;height:3.70px;background:#217346;"></div>
<div class="r" style="left:42.00px;top:0.50px;width:40.00px;height:12.90px;background:#ffffff;"></div>
<div class="t" style="top:3.80px;font-size:8.5px;color:#000;font-weight:normal;font-family:'Liberation Sans', sans-serif;left:1.80px;">July 1, 2015 - June 30, 2016</div>
<div class="t" style="top:25.96px;font-size:12.8px;color:#ffffff;font-weight:bold;font-family:'Liberation Mono', monospace;letter-spacing:0.99px;left:3.40px;transform:scaleY(0.93);transform-origin:0 10.8px;">TABLE 9 - CIRCULATION: TYPE OF MATERIAL</div>
<div class="t" style="top:63.01px;font-size:9.2px;color:#1a1a1a;font-weight:normal;font-family:'Liberation Sans', sans-serif;left:269.70px;width:100px;text-align:center;">Print</div>
<div class="t" style="top:63.01px;font-size:9.2px;color:#1a1a1a;font-weight:normal;font-family:'Liberation Sans', sans-serif;left:643.70px;width:100px;text-align:center;">Non-Print</div>
<div class="r" style="left:1.80px;top:86px;width:36.70px;height:14px;overflow:hidden;">
<div class="t" style="top:3.51px;font-size:9.2px;color:#111;font-weight:normal;font-family:'Liberation Sans', sans-serif;left:0.00px;">Type</div>
</div>
<div class="r" style="left:52.00px;top:86px;width:86.50px;height:14px;overflow:hidden;">
<div class="t" style="top:3.51px;font-size:9.2px;color:#111;font-weight:normal;font-family:'Liberation Sans', sans-serif;left:0.00px;">Name</div>
</div>
<div class="r" style="left:151.60px;top:86px;width:39.90px;height:14px;overflow:hidden;">
<div class="t" style="top:3.51px;font-size:9.2px;color:#111;font-weight:normal;font-family:'Liberation Sans', sans-serif;left:0.00px;">Adult Books</div>
</div>
<div class="r" style="left:203.80px;top:86px;width:65.50px;height:14px;overflow:hidden;">
<div class="t" style="top:3.51px;font-size:9.2px;color:#111;font-weight:normal;font-family:'Liberation Sans', sans-serif;left:0.00px;">Young Adult Books</div>
</div>
<div class="r" style="left:282.00px;top:86px;width:51.40px;height:14px;overflow:hidden;">
<div class="t" style="top:3.51px;font-size:9.2px;color:#111;font-weight:normal;font-family:'Liberation Sans', sans-serif;left:0.00px;">Juvenile Books</div>
</div>
<div class="r" style="left:348.80px;top:86px;width:36.70px;height:14px;overflow:hidden;">
<div class="t" style="top:3.51px;font-size:9.2px;color:#111;font-weight:normal;font-family:'Liberation Sans', sans-serif;left:0.00px;">Periodicals</div>
</div>
<div class="r" style="left:398.00px;top:86px;width:81.00px;height:14px;overflow:hidden;">
<div class="t" style="top:3.51px;font-size:9.2px;color:#111;font-weight:normal;font-family:'Liberation Sans', sans-serif;left:0.00px;">Total Print Circulation</div>
</div>
<div class="r" style="left:491.40px;top:86px;width:54.10px;height:14px;overflow:hidden;">
<div class="t" style="top:3.51px;font-size:9.2px;color:#111;font-weight:normal;font-family:'Liberation Sans', sans-serif;left:0.00px;">Audio &amp; eAudio</div>
</div>
<div class="r" style="left:557.90px;top:86px;width:54.10px;height:14px;overflow:hidden;">
<div class="t" style="top:3.51px;font-size:9.2px;color:#111;font-weight:normal;font-family:'Liberation Sans', sans-serif;left:0.00px;">Video &amp; eVideo</div>
</div>
<div class="r" style="left:628.30px;top:86px;width:22.70px;height:14px;overflow:hidden;">
<div class="t" style="top:3.51px;font-size:9.2px;color:#111;font-weight:normal;font-family:'Liberation Sans', sans-serif;left:0.00px;">eBooks</div>
</div>
<div class="r" style="left:666.30px;top:86px;width:41.70px;height:14px;overflow:hidden;">
<div class="t" style="top:3.51px;font-size:9.2px;color:#111;font-weight:normal;font-family:'Liberation Sans', sans-serif;left:0.00px;">ePeriodicals</div>
</div>
<div class="r" style="left:723.20px;top:86px;width:33.80px;height:14px;overflow:hidden;">
<div class="t" style="top:3.51px;font-size:9.2px;color:#111;font-weight:normal;font-family:'Liberation Sans', sans-serif;left:0.00px;">Databases</div>
</div>
<div class="t" style="top:76.21px;font-size:9.2px;color:#111;font-weight:normal;font-family:'Liberation Sans', sans-serif;left:758.50px;width:150px;text-align:center;">Total Use of Electronic</div>
<div class="t" style="top:89.31px;font-size:9.2px;color:#111;font-weight:normal;font-family:'Liberation Sans', sans-serif;left:757.40px;width:150px;text-align:center;">Materials</div>
<div class="t" style="top:76.21px;font-size:9.2px;color:#111;font-weight:normal;font-family:'Liberation Sans', sans-serif;left:886.50px;width:100px;text-align:center;">Total Collection</div>
<div class="t" style="top:89.31px;font-size:9.2px;color:#111;font-weight:normal;font-family:'Liberation Sans', sans-serif;left:886.50px;width:100px;text-align:center;">Use</div>
<div class="r" style="left:38.50px;top:87.60px;width:10.20px;height:11.20px;background:#d6d6d6;box-sizing:border-box;border:1px solid #b0b0b0;"></div>
<svg class="r" style="left:38.5px;top:87.60000000000002px;" width="10" height="11" viewBox="0 0 10 11"><path d="M2.6 4.6 L7.6 4.6 L5.1 7.3 Z" fill="#505050"/></svg>
<div class="r" style="left:138.50px;top:87.60px;width:10.20px;height:11.20px;background:#d6d6d6;box-sizing:border-box;border:1px solid #b0b0b0;"></div>
<svg class="r" style="left:138.5px;top:87.60000000000002px;" width="10" height="11" viewBox="0 0 10 11"><path d="M2.6 4.6 L7.6 4.6 L5.1 7.3 Z" fill="#505050"/></svg>
<div class="r" style="left:191.50px;top:87.60px;width:10.20px;height:11.20px;background:#d6d6d6;box-sizing:border-box;border:1px solid #b0b0b0;"></div>
<svg class="r" style="left:191.5px;top:87.60000000000002px;" width="10" height="11" viewBox="0 0 10 11"><path d="M2.6 4.6 L7.6 4.6 L5.1 7.3 Z" fill="#505050"/></svg>
<div class="r" style="left:269.30px;top:87.60px;width:10.20px;height:11.20px;background:#d6d6d6;box-sizing:border-box;border:1px solid #b0b0b0;"></div>
<svg class="r" style="left:269.3px;top:87.60000000000002px;" width="10" height="11" viewBox="0 0 10 11"><path d="M2.6 4.6 L7.6 4.6 L5.1 7.3 Z" fill="#505050"/></svg>
<div class="r" style="left:333.40px;top:87.60px;width:10.20px;height:11.20px;background:#d6d6d6;box-sizing:border-box;border:1px solid #b0b0b0;"></div>
<svg class="r" style="left:333.4px;top:87.60000000000002px;" width="10" height="11" viewBox="0 0 10 11"><path d="M2.6 4.6 L7.6 4.6 L5.1 7.3 Z" fill="#505050"/></svg>
<div class="r" style="left:385.50px;top:87.60px;width:10.20px;height:11.20px;background:#d6d6d6;box-sizing:border-box;border:1px solid #b0b0b0;"></div>
<svg class="r" style="left:385.5px;top:87.60000000000002px;" width="10" height="11" viewBox="0 0 10 11"><path d="M2.6 4.6 L7.6 4.6 L5.1 7.3 Z" fill="#505050"/></svg>
<div class="r" style="left:479.00px;top:87.60px;width:10.20px;height:11.20px;background:#d6d6d6;box-sizing:border-box;border:1px solid #b0b0b0;"></div>
<svg class="r" style="left:479px;top:87.60000000000002px;" width="10" height="11" viewBox="0 0 10 11"><path d="M2.6 4.6 L7.6 4.6 L5.1 7.3 Z" fill="#505050"/></svg>
<div class="r" style="left:545.50px;top:87.60px;width:10.20px;height:11.20px;background:#d6d6d6;box-sizing:border-box;border:1px solid #b0b0b0;"></div>
<svg class="r" style="left:545.5px;top:87.60000000000002px;" width="10" height="11" viewBox="0 0 10 11"><path d="M2.6 4.6 L7.6 4.6 L5.1 7.3 Z" fill="#505050"/></svg>
<div class="r" style="left:612.00px;top:87.60px;width:10.20px;height:11.20px;background:#d6d6d6;box-sizing:border-box;border:1px solid #b0b0b0;"></div>
<svg class="r" style="left:612px;top:87.60000000000002px;" width="10" height="11" viewBox="0 0 10 11"><path d="M2.6 4.6 L7.6 4.6 L5.1 7.3 Z" fill="#505050"/></svg>
<div class="r" style="left:651.00px;top:87.60px;width:10.20px;height:11.20px;background:#d6d6d6;box-sizing:border-box;border:1px solid #b0b0b0;"></div>
<svg class="r" style="left:651px;top:87.60000000000002px;" width="10" height="11" viewBox="0 0 10 11"><path d="M2.6 4.6 L7.6 4.6 L5.1 7.3 Z" fill="#505050"/></svg>
<div class="r" style="left:708.00px;top:87.60px;width:10.20px;height:11.20px;background:#d6d6d6;box-sizing:border-box;border:1px solid #b0b0b0;"></div>
<svg class="r" style="left:708px;top:87.60000000000002px;" width="10" height="11" viewBox="0 0 10 11"><path d="M2.6 4.6 L7.6 4.6 L5.1 7.3 Z" fill="#505050"/></svg>
<div class="r" style="left:757.00px;top:87.60px;width:10.20px;height:11.20px;background:#d6d6d6;box-sizing:border-box;border:1px solid #b0b0b0;"></div>
<svg class="r" style="left:757px;top:87.60000000000002px;" width="10" height="11" viewBox="0 0 10 11"><path d="M2.6 4.6 L7.6 4.6 L5.1 7.3 Z" fill="#505050"/></svg>
<div class="r" style="left:886.50px;top:87.60px;width:10.20px;height:11.20px;background:#d6d6d6;box-sizing:border-box;border:1px solid #b0b0b0;"></div>
<svg class="r" style="left:886.5px;top:87.60000000000002px;" width="10" height="11" viewBox="0 0 10 11"><path d="M2.6 4.6 L7.6 4.6 L5.1 7.3 Z" fill="#505050"/></svg>
<div class="r" style="left:965.00px;top:87.60px;width:10.20px;height:11.20px;background:#d6d6d6;box-sizing:border-box;border:1px solid #b0b0b0;"></div>
<svg class="r" style="left:965px;top:87.60000000000002px;" width="10" height="11" viewBox="0 0 10 11"><path d="M2.6 4.6 L7.6 4.6 L5.1 7.3 Z" fill="#505050"/></svg>
<div class="t" style="top:103.63px;font-size:9.3px;color:#111;font-weight:normal;font-family:'Liberation Sans', sans-serif;left:1.40px;">County</div>
<div class="t" style="top:103.63px;font-size:9.3px;color:#111;font-weight:normal;font-family:'Liberation Sans', sans-serif;left:51.70px;">Alamance</div>
<div class="t" style="top:104.39px;font-size:8.4px;color:#111;font-weight:normal;font-family:'Liberation Sans', sans-serif;left:120.70px;width:80px;text-align:right;">233379</div>
<div class="t" style="top:104.39px;font-size:8.4px;color:#111;font-weight:normal;font-family:'Liberation Sans', sans-serif;left:198.50px;width:80px;text-align:right;">22859</div>
<div class="t" style="top:104.39px;font-size:8.4px;color:#111;font-weight:normal;font-family:'Liberation Sans', sans-serif;left:262.60px;width:80px;text-align:right;">200708</div>
<div class="t" style="top:104.39px;font-size:8.4px;color:#111;font-weight:normal;font-family:'Liberation Sans', sans-serif;left:314.70px;width:80px;text-align:right;">6418</div>
<div class="t" style="top:104.39px;font-size:8.4px;color:#111;font-weight:normal;font-family:'Liberation Sans', sans-serif;left:408.20px;width:80px;text-align:right;">470473</div>
<div class="t" style="top:104.39px;font-size:8.4px;color:#111;font-weight:normal;font-family:'Liberation Sans', sans-serif;left:474.70px;width:80px;text-align:right;">59191</div>
<div class="t" style="top:104.39px;font-size:8.4px;color:#111;font-weight:normal;font-family:'Liberation Sans', sans-serif;left:541.20px;width:80px;text-align:right;">285299</div>
<div class="t" style="top:104.39px;font-size:8.4px;color:#111;font-weight:normal;font-family:'Liberation Sans', sans-serif;left:580.20px;width:80px;text-align:right;">5212</div>
<div class="t" style="top:104.39px;font-size:8.4px;color:#111;font-weight:normal;font-family:'Liberation Sans', sans-serif;left:637.20px;width:80px;text-align:right;">3765</div>
<div class="t" style="top:104.39px;font-size:8.4px;color:#111;font-weight:normal;font-family:'Liberation Sans', sans-serif;left:686.20px;width:80px;text-align:right;">106184</div>
<div class="t" style="top:104.39px;font-size:8.4px;color:#111;font-weight:normal;font-family:'Liberation Sans', sans-serif;left:815.70px;width:80px;text-align:right;">119802</div>
<div class="t" style="top:104.39px;font-size:8.4px;color:#111;font-weight:normal;font-family:'Liberation Sans', sans-serif;left:894.20px;width:80px;text-align:right;">937098</div>
<div class="t" style="top:116.63px;font-size:9.3px;color:#111;font-weight:normal;font-family:'Liberation Sans', sans-serif;left:1.40px;">County</div>
<div class="t" style="top:116.63px;font-size:9.3px;color:#111;font-weight:normal;font-family:'Liberation Sans', sans-serif;left:51.70px;">Alexander</div>
<div class="t" style="top:117.39px;font-size:8.4px;color:#111;font-weight:normal;font-family:'Liberation Sans', sans-serif;left:120.70px;width:80px;text-align:right;">34500</div>
<div class="t" style="top:117.39px;font-size:8.4px;color:#111;font-weight:normal;font-family:'Liberation Sans', sans-serif;left:270.30px;width:10px;text-align:center;">-</div>
<div class="t" style="top:117.39px;font-size:8.4px;color:#111;font-weight:normal;font-family:'Liberation Sans', sans-serif;left:262.60px;width:80px;text-align:right;">42978</div>
<div class="t" style="top:117.39px;font-size:8.4px;color:#111;font-weight:normal;font-family:'Liberation Sans', sans-serif;left:314.70px;width:80px;text-align:right;">558</div>
<div class="t" style="top:117.39px;font-size:8.4px;color:#111;font-weight:normal;font-family:'Liberation Sans', sans-serif;left:408.20px;width:80px;text-align:right;">85500</div>
<div class="t" style="top:117.39px;font-size:8.4px;color:#111;font-weight:normal;font-family:'Liberation Sans', sans-serif;left:474.70px;width:80px;text-align:right;">6384</div>
<div class="t" style="top:117.39px;font-size:8.4px;color:#111;font-weight:normal;font-family:'Liberation Sans', sans-serif;left:541.20px;width:80px;text-align:right;">19926</div>
<div class="t" style="top:117.39px;font-size:8.4px;color:#111;font-weight:normal;font-family:'Liberation Sans', sans-serif;left:580.20px;width:80px;text-align:right;">300</div>
<div class="t" style="top:117.39px;font-size:8.4px;color:#111;font-weight:normal;font-family:'Liberation Sans', sans-serif;left:709.00px;width:10px;text-align:center;">-</div>
<div class="t" style="top:117.39px;font-size:8.4px;color:#111;font-weight:normal;font-family:'Liberation Sans', sans-serif;left:686.20px;width:80px;text-align:right;">1312</div>
<div class="t" style="top:117.39px;font-size:8.4px;color:#111;font-weight:normal;font-family:'Liberation Sans', sans-serif;left:815.70px;width:80px;text-align:right;">2044</div>
<div class="t" style="top:117.39px;font-size:8.4px;color:#111;font-weight:normal;font-family:'Liberation Sans', sans-serif;left:894.20px;width:80px;text-align:right;">113422</div>
<div class="t" style="top:129.63px;font-size:9.3px;color:#111;font-weight:normal;font-family:'Liberation Sans', sans-serif;left:1.40px;">County</div>
<div class="t" style="top:129.63px;font-size:9.3px;color:#111;font-weight:normal;font-family:'Liberation Sans', sans-serif;left:51.70px;">Bladen</div>
<div class="t" style="top:130.39px;font-size:8.4px;color:#111;font-weight:normal;font-family:'Liberation Sans', sans-serif;left:120.70px;width:80px;text-align:right;">14310</div>
<div class="t" style="top:130.39px;font-size:8.4px;color:#111;font-weight:normal;font-family:'Liberation Sans', sans-serif;left:270.30px;width:10px;text-align:center;">-</div>
<div class="t" style="top:130.39px;font-size:8.4px;color:#111;font-weight:normal;font-family:'Liberation Sans', sans-serif;left:262.60px;width:80px;text-align:right;">12985</div>
<div class="t" style="top:130.39px;font-size:8.4px;color:#111;font-weight:normal;font-family:'Liberation Sans', sans-serif;left:314.70px;width:80px;text-align:right;">17</div>
<div class="t" style="top:130.39px;font-size:8.4px;color:#111;font-weight:normal;font-family:'Liberation Sans', sans-serif;left:408.20px;width:80px;text-align:right;">27312</div>
<div class="t" style="top:130.39px;font-size:8.4px;color:#111;font-weight:normal;font-family:'Liberation Sans', sans-serif;left:474.70px;width:80px;text-align:right;">1735</div>
<div class="t" style="top:130.39px;font-size:8.4px;color:#111;font-weight:normal;font-family:'Liberation Sans', sans-serif;left:541.20px;width:80px;text-align:right;">3374</div>
<div class="t" style="top:130.39px;font-size:8.4px;color:#111;font-weight:normal;font-family:'Liberation Sans', sans-serif;left:580.20px;width:80px;text-align:right;">114</div>
<div class="t" style="top:130.39px;font-size:8.4px;color:#111;font-weight:normal;font-family:'Liberation Sans', sans-serif;left:709.00px;width:10px;text-align:center;">-</div>
<div class="t" style="top:130.39px;font-size:8.4px;color:#111;font-weight:normal;font-family:'Liberation Sans', sans-serif;left:686.20px;width:80px;text-align:right;">4491</div>
<div class="t" style="top:130.39px;font-size:8.4px;color:#111;font-weight:normal;font-family:'Liberation Sans', sans-serif;left:815.70px;width:80px;text-align:right;">4978</div>
<div class="t" style="top:130.39px;font-size:8.4px;color:#111;font-weight:normal;font-family:'Liberation Sans', sans-serif;left:894.20px;width:80px;text-align:right;">37026</div>
<div class="t" style="top:143.63px;font-size:9.3px;color:#111;font-weight:normal;font-family:'Liberation Sans', sans-serif;left:1.40px;">County</div>
<div class="t" style="top:143.63px;font-size:9.3px;color:#111;font-weight:normal;font-family:'Liberation Sans', sans-serif;left:51.70px;">Brunswick</div>
<div class="t" style="top:144.39px;font-size:8.4px;color:#111;font-weight:normal;font-family:'Liberation Sans', sans-serif;left:120.70px;width:80px;text-align:right;">227822</div>
<div class="t" style="top:144.39px;font-size:8.4px;color:#111;font-weight:normal;font-family:'Liberation Sans', sans-serif;left:270.30px;width:10px;text-align:center;">-</div>
<div class="t" style="top:144.39px;font-size:8.4px;color:#111;font-weight:normal;font-family:'Liberation Sans', sans-serif;left:262.60px;width:80px;text-align:right;">84862</div>
<div class="t" style="top:144.39px;font-size:8.4px;color:#111;font-weight:normal;font-family:'Liberation Sans', sans-serif;left:314.70px;width:80px;text-align:right;">750</div>
<div class="t" style="top:144.39px;font-size:8.4px;color:#111;font-weight:normal;font-family:'Liberation Sans', sans-serif;left:408.20px;width:80px;text-align:right;">313434</div>
<div class="t" style="top:144.39px;font-size:8.4px;color:#111;font-weight:normal;font-family:'Liberation Sans', sans-serif;left:474.70px;width:80px;text-align:right;">18377</div>
<div class="t" style="top:144.39px;font-size:8.4px;color:#111;font-weight:normal;font-family:'Liberation Sans', sans-serif;left:541.20px;width:80px;text-align:right;">36859</div>
<div class="t" style="top:144.39px;font-size:8.4px;color:#111;font-weight:normal;font-family:'Liberation Sans', sans-serif;left:580.20px;width:80px;text-align:right;">12938</div>
<div class="t" style="top:144.39px;font-size:8.4px;color:#111;font-weight:normal;font-family:'Liberation Sans', sans-serif;left:709.00px;width:10px;text-align:center;">-</div>
<div class="t" style="top:144.39px;font-size:8.4px;color:#111;font-weight:normal;font-family:'Liberation Sans', sans-serif;left:686.20px;width:80px;text-align:right;">29018</div>
<div class="t" style="top:144.39px;font-size:8.4px;color:#111;font-weight:normal;font-family:'Liberation Sans', sans-serif;left:815.70px;width:80px;text-align:right;">43293</div>
<div class="t" style="top:144.39px;font-size:8.4px;color:#111;font-weight:normal;font-family:'Liberation Sans', sans-serif;left:894.20px;width:80px;text-align:right;">410626</div>
<div class="t" style="top:156.63px;font-size:9.3px;color:#111;font-weight:normal;font-family:'Liberation Sans', sans-serif;left:1.40px;">County</div>
<div class="t" style="top:156.63px;font-size:9.3px;color:#111;font-weight:normal;font-family:'Liberation Sans', sans-serif;left:51.70px;">Buncombe</div>
<div class="t" style="top:157.39px;font-size:8.4px;color:#111;font-weight:normal;font-family:'Liberation Sans', sans-serif;left:120.70px;width:80px;text-align:right;">597246</div>
<div class="t" style="top:157.39px;font-size:8.4px;color:#111;font-weight:normal;font-family:'Liberation Sans', sans-serif;left:198.50px;width:80px;text-align:right;">41826</div>
<div class="t" style="top:157.39px;font-size:8.4px;color:#111;font-weight:normal;font-family:'Liberation Sans', sans-serif;left:262.60px;width:80px;text-align:right;">511441</div>
<div class="t" style="top:157.39px;font-size:8.4px;color:#111;font-weight:normal;font-family:'Liberation Sans', sans-serif;left:314.70px;width:80px;text-align:right;">3</div>
<div class="t" style="top:157.39px;font-size:8.4px;color:#111;font-weight:normal;font-family:'Liberation Sans', sans-serif;left:408.20px;width:80px;text-align:right;">1153203</div>
<div class="t" style="top:157.39px;font-size:8.4px;color:#111;font-weight:normal;font-family:'Liberation Sans', sans-serif;left:474.70px;width:80px;text-align:right;">278932</div>
<div class="t" style="top:157.39px;font-size:8.4px;color:#111;font-weight:normal;font-family:'Liberation Sans', sans-serif;left:541.20px;width:80px;text-align:right;">166028</div>
<div class="t" style="top:157.39px;font-size:8.4px;color:#111;font-weight:normal;font-family:'Liberation Sans', sans-serif;left:580.20px;width:80px;text-align:right;">148361</div>
<div class="t" style="top:157.39px;font-size:8.4px;color:#111;font-weight:normal;font-family:'Liberation Sans', sans-serif;left:637.20px;width:80px;text-align:right;">9099</div>
<div class="t" style="top:157.39px;font-size:8.4px;color:#111;font-weight:normal;font-family:'Liberation Sans', sans-serif;left:686.20px;width:80px;text-align:right;">156384</div>
<div class="t" style="top:157.39px;font-size:8.4px;color:#111;font-weight:normal;font-family:'Liberation Sans', sans-serif;left:815.70px;width:80px;text-align:right;">416713</div>
<div class="t" style="top:157.39px;font-size:8.4px;color:#111;font-weight:normal;font-family:'Liberation Sans', sans-serif;left:894.20px;width:80px;text-align:right;">1913541</div>
<div class="t" style="top:169.63px;font-size:9.3px;color:#111;font-weight:normal;font-family:'Liberation Sans', sans-serif;left:1.40px;">County</div>
<div class="t" style="top:169.63px;font-size:9.3px;color:#111;font-weight:normal;font-family:'Liberation Sans', sans-serif;left:51.70px;">Burke</div>
<div class="t" style="top:170.39px;font-size:8.4px;color:#111;font-weight:normal;font-family:'Liberation Sans', sans-serif;left:120.70px;width:80px;text-align:right;">83467</div>
<div class="t" style="top:170.39px;font-size:8.4px;color:#111;font-weight:normal;font-family:'Liberation Sans', sans-serif;left:198.50px;width:80px;text-align:right;">12277</div>
<div class="t" style="top:170.39px;font-size:8.4px;color:#111;font-weight:normal;font-family:'Liberation Sans', sans-serif;left:262.60px;width:80px;text-align:right;">61356</div>
<div class="t" style="top:170.39px;font-size:8.4px;color:#111;font-weight:normal;font-family:'Liberation Sans', sans-serif;left:314.70px;width:80px;text-align:right;">219</div>
<div class="t" style="top:170.39px;font-size:8.4px;color:#111;font-weight:normal;font-family:'Liberation Sans', sans-serif;left:408.20px;width:80px;text-align:right;">157342</div>
<div class="t" style="top:170.39px;font-size:8.4px;color:#111;font-weight:normal;font-family:'Liberation Sans', sans-serif;left:474.70px;width:80px;text-align:right;">8251</div>
<div class="t" style="top:170.39px;font-size:8.4px;color:#111;font-weight:normal;font-family:'Liberation Sans', sans-serif;left:541.20px;width:80px;text-align:right;">1421</div>
<div class="t" style="top:170.39px;font-size:8.4px;color:#111;font-weight:normal;font-family:'Liberation Sans', sans-serif;left:580.20px;width:80px;text-align:right;">15585</div>
<div class="t" style="top:170.39px;font-size:8.4px;color:#111;font-weight:normal;font-family:'Liberation Sans', sans-serif;left:709.00px;width:10px;text-align:center;">-</div>
<div class="t" style="top:170.39px;font-size:8.4px;color:#111;font-weight:normal;font-family:'Liberation Sans', sans-serif;left:686.20px;width:80px;text-align:right;">18879</div>
<div class="t" style="top:170.39px;font-size:8.4px;color:#111;font-weight:normal;font-family:'Liberation Sans', sans-serif;left:815.70px;width:80px;text-align:right;">37093</div>
<div class="t" style="top:170.39px;font-size:8.4px;color:#111;font-weight:normal;font-family:'Liberation Sans', sans-serif;left:894.20px;width:80px;text-align:right;">207678</div>
<div class="t" style="top:183.63px;font-size:9.3px;color:#111;font-weight:normal;font-family:'Liberation Sans', sans-serif;left:1.40px;">County</div>
<div class="t" style="top:183.63px;font-size:9.3px;color:#111;font-weight:normal;font-family:'Liberation Sans', sans-serif;left:51.70px;">Cabarrus</div>
<div class="t" style="top:184.39px;font-size:8.4px;color:#111;font-weight:normal;font-family:'Liberation Sans', sans-serif;left:120.70px;width:80px;text-align:right;">253376</div>
<div class="t" style="top:184.39px;font-size:8.4px;color:#111;font-weight:normal;font-family:'Liberation Sans', sans-serif;left:270.30px;width:10px;text-align:center;">-</div>
<div class="t" style="top:184.39px;font-size:8.4px;color:#111;font-weight:normal;font-family:'Liberation Sans', sans-serif;left:262.60px;width:80px;text-align:right;">358786</div>
<div class="t" style="top:184.39px;font-size:8.4px;color:#111;font-weight:normal;font-family:'Liberation Sans', sans-serif;left:314.70px;width:80px;text-align:right;">1004</div>
<div class="t" style="top:184.39px;font-size:8.4px;color:#111;font-weight:normal;font-family:'Liberation Sans', sans-serif;left:408.20px;width:80px;text-align:right;">632623</div>
<div class="t" style="top:184.39px;font-size:8.4px;color:#111;font-weight:normal;font-family:'Liberation Sans', sans-serif;left:474.70px;width:80px;text-align:right;">41373</div>
<div class="t" style="top:184.39px;font-size:8.4px;color:#111;font-weight:normal;font-family:'Liberation Sans', sans-serif;left:541.20px;width:80px;text-align:right;">52854</div>
<div class="t" style="top:184.39px;font-size:8.4px;color:#111;font-weight:normal;font-family:'Liberation Sans', sans-serif;left:580.20px;width:80px;text-align:right;">11421</div>
<div class="t" style="top:184.39px;font-size:8.4px;color:#111;font-weight:normal;font-family:'Liberation Sans', sans-serif;left:637.20px;width:80px;text-align:right;">3970</div>
<div class="t" style="top:184.39px;font-size:8.4px;color:#111;font-weight:normal;font-family:'Liberation Sans', sans-serif;left:686.20px;width:80px;text-align:right;">50391</div>
<div class="t" style="top:184.39px;font-size:8.4px;color:#111;font-weight:normal;font-family:'Liberation Sans', sans-serif;left:815.70px;width:80px;text-align:right;">80404</div>
<div class="t" style="top:184.39px;font-size:8.4px;color:#111;font-weight:normal;font-family:'Liberation Sans', sans-serif;left:894.20px;width:80px;text-align:right;">815965</div>
<div class="t" style="top:196.63px;font-size:9.3px;color:#111;font-weight:normal;font-family:'Liberation Sans', sans-serif;left:1.40px;">County</div>
<div class="t" style="top:196.63px;font-size:9.3px;color:#111;font-weight:normal;font-family:'Liberation Sans', sans-serif;left:51.70px;">Caldwell</div>
<div class="t" style="top:197.39px;font-size:8.4px;color:#111;font-weight:normal;font-family:'Liberation Sans', sans-serif;left:120.70px;width:80px;text-align:right;">97180</div>
<div class="t" style="top:197.39px;font-size:8.4px;color:#111;font-weight:normal;font-family:'Liberation Sans', sans-serif;left:198.50px;width:80px;text-align:right;">10971</div>
<div class="t" style="top:197.39px;font-size:8.4px;color:#111;font-weight:normal;font-family:'Liberation Sans', sans-serif;left:262.60px;width:80px;text-align:right;">63104</div>
<div class="t" style="top:197.39px;font-size:8.4px;color:#111;font-weight:normal;font-family:'Liberation Sans', sans-serif;left:314.70px;width:80px;text-align:right;">3830</div>
<div class="t" style="top:197.39px;font-size:8.4px;color:#111;font-weight:normal;font-family:'Liberation Sans', sans-serif;left:408.20px;width:80px;text-align:right;">175293</div>
<div class="t" style="top:197.39px;font-size:8.4px;color:#111;font-weight:normal;font-family:'Liberation Sans', sans-serif;left:474.70px;width:80px;text-align:right;">19306</div>
<div class="t" style="top:197.39px;font-size:8.4px;color:#111;font-weight:normal;font-family:'Liberation Sans', sans-serif;left:541.20px;width:80px;text-align:right;">53348</div>
<div class="t" style="top:197.39px;font-size:8.4px;color:#111;font-weight:normal;font-family:'Liberation Sans', sans-serif;left:580.20px;width:80px;text-align:right;">16086</div>
<div class="t" style="top:197.39px;font-size:8.4px;color:#111;font-weight:normal;font-family:'Liberation Sans', sans-serif;left:637.20px;width:80px;text-align:right;">425</div>
<div class="t" style="top:197.39px;font-size:8.4px;color:#111;font-weight:normal;font-family:'Liberation Sans', sans-serif;left:686.20px;width:80px;text-align:right;">22249</div>
<div class="t" style="top:197.39px;font-size:8.4px;color:#111;font-weight:normal;font-family:'Liberation Sans', sans-serif;left:815.70px;width:80px;text-align:right;">48697</div>
<div class="t" style="top:197.39px;font-size:8.4px;color:#111;font-weight:normal;font-family:'Liberation Sans', sans-serif;left:894.20px;width:80px;text-align:right;">286709</div>
<div class="t" style="top:209.63px;font-size:9.3px;color:#111;font-weight:normal;font-family:'Liberation Sans', sans-serif;left:1.40px;">County</div>
<div class="t" style="top:209.63px;font-size:9.3px;color:#111;font-weight:normal;font-family:'Liberation Sans', sans-serif;left:51.70px;">Caswell</div>
<div class="t" style="top:210.39px;font-size:8.4px;color:#111;font-weight:normal;font-family:'Liberation Sans', sans-serif;left:120.70px;width:80px;text-align:right;">17535</div>
<div class="t" style="top:210.39px;font-size:8.4px;color:#111;font-weight:normal;font-family:'Liberation Sans', sans-serif;left:198.50px;width:80px;text-align:right;">3849</div>
<div class="t" style="top:210.39px;font-size:8.4px;color:#111;font-weight:normal;font-family:'Liberation Sans', sans-serif;left:262.60px;width:80px;text-align:right;">16089</div>
<div class="t" style="top:210.39px;font-size:8.4px;color:#111;font-weight:normal;font-family:'Liberation Sans', sans-serif;left:314.70px;width:80px;text-align:right;">600</div>
<div class="t" style="top:210.39px;font-size:8.4px;color:#111;font-weight:normal;font-family:'Liberation Sans', sans-serif;left:408.20px;width:80px;text-align:right;">41578</div>
<div class="t" style="top:210.39px;font-size:8.4px;color:#111;font-weight:normal;font-family:'Liberation Sans', sans-serif;left:474.70px;width:80px;text-align:right;">1647</div>
<div class="t" style="top:210.39px;font-size:8.4px;color:#111;font-weight:normal;font-family:'Liberation Sans', sans-serif;left:541.20px;width:80px;text-align:right;">8925</div>
<div class="t" style="top:210.39px;font-size:8.4px;color:#111;font-weight:normal;font-family:'Liberation Sans', sans-serif;left:580.20px;width:80px;text-align:right;">1963</div>
<div class="t" style="top:210.39px;font-size:8.4px;color:#111;font-weight:normal;font-family:'Liberation Sans', sans-serif;left:709.00px;width:10px;text-align:center;">-</div>
<div class="t" style="top:210.39px;font-size:8.4px;color:#111;font-weight:normal;font-family:'Liberation Sans', sans-serif;left:686.20px;width:80px;text-align:right;">76</div>
<div class="t" style="top:210.39px;font-size:8.4px;color:#111;font-weight:normal;font-family:'Liberation Sans', sans-serif;left:815.70px;width:80px;text-align:right;">2465</div>
<div class="t" style="top:210.39px;font-size:8.4px;color:#111;font-weight:normal;font-family:'Liberation Sans', sans-serif;left:894.20px;width:80px;text-align:right;">54190</div>
<div class="t" style="top:223.63px;font-size:9.3px;color:#111;font-weight:normal;font-family:'Liberation Sans', sans-serif;left:1.40px;">County</div>
<div class="t" style="top:223.63px;font-size:9.3px;color:#111;font-weight:normal;font-family:'Liberation Sans', sans-serif;left:51.70px;">Catawba</div>
<div class="t" style="top:224.39px;font-size:8.4px;color:#111;font-weight:normal;font-family:'Liberation Sans', sans-serif;left:120.70px;width:80px;text-align:right;">156320</div>
<div class="t" style="top:224.39px;font-size:8.4px;color:#111;font-weight:normal;font-family:'Liberation Sans', sans-serif;left:198.50px;width:80px;text-align:right;">19926</div>
<div class="t" style="top:224.39px;font-size:8.4px;color:#111;font-weight:normal;font-family:'Liberation Sans', sans-serif;left:262.60px;width:80px;text-align:right;">139382</div>
<div class="t" style="top:224.39px;font-size:8.4px;color:#111;font-weight:normal;font-family:'Liberation Sans', sans-serif;left:314.70px;width:80px;text-align:right;">5014</div>
<div class="t" style="top:224.39px;font-size:8.4px;color:#111;font-weight:normal;font-family:'Liberation Sans', sans-serif;left:408.20px;width:80px;text-align:right;">320642</div>
<div class="t" style="top:224.39px;font-size:8.4px;color:#111;font-weight:normal;font-family:'Liberation Sans', sans-serif;left:474.70px;width:80px;text-align:right;">45064</div>
<div class="t" style="top:224.39px;font-size:8.4px;color:#111;font-weight:normal;font-family:'Liberation Sans', sans-serif;left:541.20px;width:80px;text-align:right;">164837</div>
<div class="t" style="top:224.39px;font-size:8.4px;color:#111;font-weight:normal;font-family:'Liberation Sans', sans-serif;left:580.20px;width:80px;text-align:right;">23793</div>
<div class="t" style="top:224.39px;font-size:8.4px;color:#111;font-weight:normal;font-family:'Liberation Sans', sans-serif;left:637.20px;width:80px;text-align:right;">518</div>
<div class="t" style="top:224.39px;font-size:8.4px;color:#111;font-weight:normal;font-family:'Liberation Sans', sans-serif;left:686.20px;width:80px;text-align:right;">111132</div>
<div class="t" style="top:224.39px;font-size:8.4px;color:#111;font-weight:normal;font-family:'Liberation Sans', sans-serif;left:815.70px;width:80px;text-align:right;">161433</div>
<div class="t" style="top:224.39px;font-size:8.4px;color:#111;font-weight:normal;font-family:'Liberation Sans', sans-serif;left:894.20px;width:80px;text-align:right;">665986</div>
<div class="t" style="top:236.63px;font-size:9.3px;color:#111;font-weight:normal;font-family:'Liberation Sans', sans-serif;left:1.40px;">County</div>
<div class="t" style="top:236.63px;font-size:9.3px;color:#111;font-weight:normal;font-family:'Liberation Sans', sans-serif;left:51.70px;">Chatham</div>
<div class="t" style="top:237.39px;font-size:8.4px;color:#111;font-weight:normal;font-family:'Liberation Sans', sans-serif;left:120.70px;width:80px;text-align:right;">82568</div>
<div class="t" style="top:237.39px;font-size:8.4px;color:#111;font-weight:normal;font-family:'Liberation Sans', sans-serif;left:198.50px;width:80px;text-align:right;">8557</div>
<div class="t" style="top:237.39px;font-size:8.4px;color:#111;font-weight:normal;font-family:'Liberation Sans', sans-serif;left:262.60px;width:80px;text-align:right;">89240</div>
<div class="t" style="top:237.39px;font-size:8.4px;color:#111;font-weight:normal;font-family:'Liberation Sans', sans-serif;left:314.70px;width:80px;text-align:right;">2225</div>
<div class="t" style="top:237.39px;font-size:8.4px;color:#111;font-weight:normal;font-family:'Liberation Sans', sans-serif;left:408.20px;width:80px;text-align:right;">182590</div>
<div class="t" style="top:237.39px;font-size:8.4px;color:#111;font-weight:normal;font-family:'Liberation Sans', sans-serif;left:474.70px;width:80px;text-align:right;">16313</div>
<div class="t" style="top:237.39px;font-size:8.4px;color:#111;font-weight:normal;font-family:'Liberation Sans', sans-serif;left:541.20px;width:80px;text-align:right;">38153</div>
<div class="t" style="top:237.39px;font-size:8.4px;color:#111;font-weight:normal;font-family:'Liberation Sans', sans-serif;left:580.20px;width:80px;text-align:right;">29316</div>
<div class="t" style="top:237.39px;font-size:8.4px;color:#111;font-weight:normal;font-family:'Liberation Sans', sans-serif;left:637.20px;width:80px;text-align:right;">1275</div>
<div class="t" style="top:237.39px;font-size:8.4px;color:#111;font-weight:normal;font-family:'Liberation Sans', sans-serif;left:686.20px;width:80px;text-align:right;">8013</div>
<div class="t" style="top:237.39px;font-size:8.4px;color:#111;font-weight:normal;font-family:'Liberation Sans', sans-serif;left:815.70px;width:80px;text-align:right;">42953</div>
<div class="t" style="top:237.39px;font-size:8.4px;color:#111;font-weight:normal;font-family:'Liberation Sans', sans-serif;left:894.20px;width:80px;text-align:right;">275659</div>
<div class="t" style="top:249.63px;font-size:9.3px;color:#111;font-weight:normal;font-family:'Liberation Sans', sans-serif;left:1.40px;">County</div>
<div class="t" style="top:249.63px;font-size:9.3px;color:#111;font-weight:normal;font-family:'Liberation Sans', sans-serif;left:51.70px;">Cleveland</div>
<div class="t" style="top:250.39px;font-size:8.4px;color:#111;font-weight:normal;font-family:'Liberation Sans', sans-serif;left:120.70px;width:80px;text-align:right;">76580</div>
<div class="t" style="top:250.39px;font-size:8.4px;color:#111;font-weight:normal;font-family:'Liberation Sans', sans-serif;left:198.50px;width:80px;text-align:right;">6737</div>
<div class="t" style="top:250.39px;font-size:8.4px;color:#111;font-weight:normal;font-family:'Liberation Sans', sans-serif;left:262.60px;width:80px;text-align:right;">60429</div>
<div class="t" style="top:250.39px;font-size:8.4px;color:#111;font-weight:normal;font-family:'Liberation Sans', sans-serif;left:314.70px;width:80px;text-align:right;">8</div>
<div class="t" style="top:250.39px;font-size:8.4px;color:#111;font-weight:normal;font-family:'Liberation Sans', sans-serif;left:408.20px;width:80px;text-align:right;">144141</div>
<div class="t" style="top:250.39px;font-size:8.4px;color:#111;font-weight:normal;font-family:'Liberation Sans', sans-serif;left:474.70px;width:80px;text-align:right;">26724</div>
<div class="t" style="top:250.39px;font-size:8.4px;color:#111;font-weight:normal;font-family:'Liberation Sans', sans-serif;left:541.20px;width:80px;text-align:right;">19028</div>
<div class="t" style="top:250.39px;font-size:8.4px;color:#111;font-weight:normal;font-family:'Liberation Sans', sans-serif;left:580.20px;width:80px;text-align:right;">12170</div>
<div class="t" style="top:250.39px;font-size:8.4px;color:#111;font-weight:normal;font-family:'Liberation Sans', sans-serif;left:709.00px;width:10px;text-align:center;">-</div>
<div class="t" style="top:250.39px;font-size:8.4px;color:#111;font-weight:normal;font-family:'Liberation Sans', sans-serif;left:686.20px;width:80px;text-align:right;">22493</div>
<div class="t" style="top:250.39px;font-size:8.4px;color:#111;font-weight:normal;font-family:'Liberation Sans', sans-serif;left:815.70px;width:80px;text-align:right;">36360</div>
<div class="t" style="top:250.39px;font-size:8.4px;color:#111;font-weight:normal;font-family:'Liberation Sans', sans-serif;left:894.20px;width:80px;text-align:right;">229934</div>
<div class="t" style="top:263.63px;font-size:9.3px;color:#111;font-weight:normal;font-family:'Liberation Sans', sans-serif;left:1.40px;">County</div>
<div class="t" style="top:263.63px;font-size:9.3px;color:#111;font-weight:normal;font-family:'Liberation Sans', sans-serif;left:51.70px;">Columbus</div>
<div class="t" style="top:264.39px;font-size:8.4px;color:#111;font-weight:normal;font-family:'Liberation Sans', sans-serif;left:120.70px;width:80px;text-align:right;">64983</div>
<div class="t" style="top:264.39px;font-size:8.4px;color:#111;font-weight:normal;font-family:'Liberation Sans', sans-serif;left:270.30px;width:10px;text-align:center;">-</div>
<div class="t" style="top:264.39px;font-size:8.4px;color:#111;font-weight:normal;font-family:'Liberation Sans', sans-serif;left:262.60px;width:80px;text-align:right;">24012</div>
<div class="t" style="top:264.39px;font-size:8.4px;color:#111;font-weight:normal;font-family:'Liberation Sans', sans-serif;left:314.70px;width:80px;text-align:right;">1810</div>
<div class="t" style="top:264.39px;font-size:8.4px;color:#111;font-weight:normal;font-family:'Liberation Sans', sans-serif;left:408.20px;width:80px;text-align:right;">90805</div>
<div class="t" style="top:264.39px;font-size:8.4px;color:#111;font-weight:normal;font-family:'Liberation Sans', sans-serif;left:474.70px;width:80px;text-align:right;">2475</div>
<div class="t" style="top:264.39px;font-size:8.4px;color:#111;font-weight:normal;font-family:'Liberation Sans', sans-serif;left:541.20px;width:80px;text-align:right;">11777</div>
<div class="t" style="top:264.39px;font-size:8.4px;color:#111;font-weight:normal;font-family:'Liberation Sans', sans-serif;left:580.20px;width:80px;text-align:right;">2537</div>
<div class="t" style="top:264.39px;font-size:8.4px;color:#111;font-weight:normal;font-family:'Liberation Sans', sans-serif;left:709.00px;width:10px;text-align:center;">-</div>
<div class="t" style="top:264.39px;font-size:8.4px;color:#111;font-weight:normal;font-family:'Liberation Sans', sans-serif;left:686.20px;width:80px;text-align:right;">3641</div>
<div class="t" style="top:264.39px;font-size:8.4px;color:#111;font-weight:normal;font-family:'Liberation Sans', sans-serif;left:815.70px;width:80px;text-align:right;">6658</div>
<div class="t" style="top:264.39px;font-size:8.4px;color:#111;font-weight:normal;font-family:'Liberation Sans', sans-serif;left:894.20px;width:80px;text-align:right;">111235</div>
<div class="t" style="top:276.63px;font-size:9.3px;color:#111;font-weight:normal;font-family:'Liberation Sans', sans-serif;left:1.40px;">County</div>
<div class="t" style="top:276.63px;font-size:9.3px;color:#111;font-weight:normal;font-family:'Liberation Sans', sans-serif;left:51.70px;">Cumberland</div>
<div class="t" style="top:277.39px;font-size:8.4px;color:#111;font-weight:normal;font-family:'Liberation Sans', sans-serif;left:120.70px;width:80px;text-align:right;">464595</div>
<div class="t" style="top:277.39px;font-size:8.4px;color:#111;font-weight:normal;font-family:'Liberation Sans', sans-serif;left:198.50px;width:80px;text-align:right;">87741</div>
<div class="t" style="top:277.39px;font-size:8.4px;color:#111;font-weight:normal;font-family:'Liberation Sans', sans-serif;left:262.60px;width:80px;text-align:right;">589174</div>
<div class="t" style="top:277.39px;font-size:8.4px;color:#111;font-weight:normal;font-family:'Liberation Sans', sans-serif;left:314.70px;width:80px;text-align:right;">13488</div>
<div class="t" style="top:277.39px;font-size:8.4px;color:#111;font-weight:normal;font-family:'Liberation Sans', sans-serif;left:408.20px;width:80px;text-align:right;">1161038</div>
<div class="t" style="top:277.39px;font-size:8.4px;color:#111;font-weight:normal;font-family:'Liberation Sans', sans-serif;left:474.70px;width:80px;text-align:right;">117448</div>
<div class="t" style="top:277.39px;font-size:8.4px;color:#111;font-weight:normal;font-family:'Liberation Sans', sans-serif;left:541.20px;width:80px;text-align:right;">253441</div>
<div class="t" style="top:277.39px;font-size:8.4px;color:#111;font-weight:normal;font-family:'Liberation Sans', sans-serif;left:580.20px;width:80px;text-align:right;">91437</div>
<div class="t" style="top:277.39px;font-size:8.4px;color:#111;font-weight:normal;font-family:'Liberation Sans', sans-serif;left:637.20px;width:80px;text-align:right;">5129</div>
<div class="t" style="top:277.39px;font-size:8.4px;color:#111;font-weight:normal;font-family:'Liberation Sans', sans-serif;left:686.20px;width:80px;text-align:right;">295235</div>
<div class="t" style="top:277.39px;font-size:8.4px;color:#111;font-weight:normal;font-family:'Liberation Sans', sans-serif;left:815.70px;width:80px;text-align:right;">427483</div>
<div class="t" style="top:277.39px;font-size:8.4px;color:#111;font-weight:normal;font-family:'Liberation Sans', sans-serif;left:894.20px;width:80px;text-align:right;">1923728</div>
<div class="t" style="top:289.63px;font-size:9.3px;color:#111;font-weight:normal;font-family:'Liberation Sans', sans-serif;left:1.40px;">County</div>
<div class="t" style="top:289.63px;font-size:9.3px;color:#111;font-weight:normal;font-family:'Liberation Sans', sans-serif;left:51.70px;">Davidson</div>
<div class="t" style="top:290.39px;font-size:8.4px;color:#111;font-weight:normal;font-family:'Liberation Sans', sans-serif;left:120.70px;width:80px;text-align:right;">191829</div>
<div class="t" style="top:290.39px;font-size:8.4px;color:#111;font-weight:normal;font-family:'Liberation Sans', sans-serif;left:198.50px;width:80px;text-align:right;">18581</div>
<div class="t" style="top:290.39px;font-size:8.4px;color:#111;font-weight:normal;font-family:'Liberation Sans', sans-serif;left:262.60px;width:80px;text-align:right;">131755</div>
<div class="t" style="top:290.39px;font-size:8.4px;color:#111;font-weight:normal;font-family:'Liberation Sans', sans-serif;left:314.70px;width:80px;text-align:right;">819</div>
<div class="t" style="top:290.39px;font-size:8.4px;color:#111;font-weight:normal;font-family:'Liberation Sans', sans-serif;left:408.20px;width:80px;text-align:right;">345957</div>
<div class="t" style="top:290.39px;font-size:8.4px;color:#111;font-weight:normal;font-family:'Liberation Sans', sans-serif;left:474.70px;width:80px;text-align:right;">31470</div>
<div class="t" style="top:290.39px;font-size:8.4px;color:#111;font-weight:normal;font-family:'Liberation Sans', sans-serif;left:541.20px;width:80px;text-align:right;">105020</div>
<div class="t" style="top:290.39px;font-size:8.4px;color:#111;font-weight:normal;font-family:'Liberation Sans', sans-serif;left:580.20px;width:80px;text-align:right;">59477</div>
<div class="t" style="top:290.39px;font-size:8.4px;color:#111;font-weight:normal;font-family:'Liberation Sans', sans-serif;left:637.20px;width:80px;text-align:right;">2522</div>
<div class="t" style="top:290.39px;font-size:8.4px;color:#111;font-weight:normal;font-family:'Liberation Sans', sans-serif;left:686.20px;width:80px;text-align:right;">31371</div>
<div class="t" style="top:290.39px;font-size:8.4px;color:#111;font-weight:normal;font-family:'Liberation Sans', sans-serif;left:815.70px;width:80px;text-align:right;">107304</div>
<div class="t" style="top:290.39px;font-size:8.4px;color:#111;font-weight:normal;font-family:'Liberation Sans', sans-serif;left:894.20px;width:80px;text-align:right;">575881</div>
<div class="t" style="top:303.63px;font-size:9.3px;color:#111;font-weight:normal;font-family:'Liberation Sans', sans-serif;left:1.40px;">County</div>
<div class="t" style="top:303.63px;font-size:9.3px;color:#111;font-weight:normal;font-family:'Liberation Sans', sans-serif;left:51.70px;">Davie</div>
<div class="t" style="top:304.39px;font-size:8.4px;color:#111;font-weight:normal;font-family:'Liberation Sans', sans-serif;left:120.70px;width:80px;text-align:right;">32489</div>
<div class="t" style="top:304.39px;font-size:8.4px;color:#111;font-weight:normal;font-family:'Liberation Sans', sans-serif;left:198.50px;width:80px;text-align:right;">3296</div>
<div class="t" style="top:304.39px;font-size:8.4px;color:#111;font-weight:normal;font-family:'Liberation Sans', sans-serif;left:262.60px;width:80px;text-align:right;">32421</div>
<div class="t" style="top:304.39px;font-size:8.4px;color:#111;font-weight:normal;font-family:'Liberation Sans', sans-serif;left:314.70px;width:80px;text-align:right;">292</div>
<div class="t" style="top:304.39px;font-size:8.4px;color:#111;font-weight:normal;font-family:'Liberation Sans', sans-serif;left:408.20px;width:80px;text-align:right;">69658</div>
<div class="t" style="top:304.39px;font-size:8.4px;color:#111;font-weight:normal;font-family:'Liberation Sans', sans-serif;left:474.70px;width:80px;text-align:right;">5751</div>
<div class="t" style="top:304.39px;font-size:8.4px;color:#111;font-weight:normal;font-family:'Liberation Sans', sans-serif;left:541.20px;width:80px;text-align:right;">7635</div>
<div class="t" style="top:304.39px;font-size:8.4px;color:#111;font-weight:normal;font-family:'Liberation Sans', sans-serif;left:580.20px;width:80px;text-align:right;">9372</div>
<div class="t" style="top:304.39px;font-size:8.4px;color:#111;font-weight:normal;font-family:'Liberation Sans', sans-serif;left:709.00px;width:10px;text-align:center;">-</div>
<div class="t" style="top:304.39px;font-size:8.4px;color:#111;font-weight:normal;font-family:'Liberation Sans', sans-serif;left:686.20px;width:80px;text-align:right;">17076</div>
<div class="t" style="top:304.39px;font-size:8.4px;color:#111;font-weight:normal;font-family:'Liberation Sans', sans-serif;left:815.70px;width:80px;text-align:right;">27261</div>
<div class="t" style="top:304.39px;font-size:8.4px;color:#111;font-weight:normal;font-family:'Liberation Sans', sans-serif;left:894.20px;width:80px;text-align:right;">110993</div>
<div class="t" style="top:316.63px;font-size:9.3px;color:#111;font-weight:normal;font-family:'Liberation Sans', sans-serif;left:1.40px;">County</div>
<div class="t" style="top:316.63px;font-size:9.3px;color:#111;font-weight:normal;font-family:'Liberation Sans', sans-serif;left:51.70px;">Duplin</div>
<div class="t" style="top:317.39px;font-size:8.4px;color:#111;font-weight:normal;font-family:'Liberation Sans', sans-serif;left:120.70px;width:80px;text-align:right;">27056</div>
<div class="t" style="top:317.39px;font-size:8.4px;color:#111;font-weight:normal;font-family:'Liberation Sans', sans-serif;left:198.50px;width:80px;text-align:right;">791</div>
<div class="t" style="top:317.39px;font-size:8.4px;color:#111;font-weight:normal;font-family:'Liberation Sans', sans-serif;left:262.60px;width:80px;text-align:right;">16215</div>
<div class="t" style="top:317.39px;font-size:8.4px;color:#111;font-weight:normal;font-family:'Liberation Sans', sans-serif;left:314.70px;width:80px;text-align:right;">148</div>
<div class="t" style="top:317.39px;font-size:8.4px;color:#111;font-weight:normal;font-family:'Liberation Sans', sans-serif;left:408.20px;width:80px;text-align:right;">44210</div>
<div class="t" style="top:317.39px;font-size:8.4px;color:#111;font-weight:normal;font-family:'Liberation Sans', sans-serif;left:474.70px;width:80px;text-align:right;">2239</div>
<div class="t" style="top:317.39px;font-size:8.4px;color:#111;font-weight:normal;font-family:'Liberation Sans', sans-serif;left:541.20px;width:80px;text-align:right;">8594</div>
<div class="t" style="top:317.39px;font-size:8.4px;color:#111;font-weight:normal;font-family:'Liberation Sans', sans-serif;left:580.20px;width:80px;text-align:right;">3699</div>
<div class="t" style="top:317.39px;font-size:8.4px;color:#111;font-weight:normal;font-family:'Liberation Sans', sans-serif;left:709.00px;width:10px;text-align:center;">-</div>
<div class="t" style="top:317.39px;font-size:8.4px;color:#111;font-weight:normal;font-family:'Liberation Sans', sans-serif;left:686.20px;width:80px;text-align:right;">1971</div>
<div class="t" style="top:317.39px;font-size:8.4px;color:#111;font-weight:normal;font-family:'Liberation Sans', sans-serif;left:815.70px;width:80px;text-align:right;">5857</div>
<div class="t" style="top:317.39px;font-size:8.4px;color:#111;font-weight:normal;font-family:'Liberation Sans', sans-serif;left:894.20px;width:80px;text-align:right;">60713</div>
<div class="t" style="top:329.63px;font-size:9.3px;color:#111;font-weight:normal;font-family:'Liberation Sans', sans-serif;left:1.40px;">County</div>
<div class="t" style="top:329.63px;font-size:9.3px;color:#111;font-weight:normal;font-family:'Liberation Sans', sans-serif;left:51.70px;">Durham</div>
<div class="t" style="top:330.39px;font-size:8.4px;color:#111;font-weight:normal;font-family:'Liberation Sans', sans-serif;left:120.70px;width:80px;text-align:right;">811764</div>
<div class="t" style="top:330.39px;font-size:8.4px;color:#111;font-weight:normal;font-family:'Liberation Sans', sans-serif;left:198.50px;width:80px;text-align:right;">79980</div>
<div class="t" style="top:330.39px;font-size:8.4px;color:#111;font-weight:normal;font-family:'Liberation Sans', sans-serif;left:262.60px;width:80px;text-align:right;">1029035</div>
<div class="t" style="top:330.39px;font-size:8.4px;color:#111;font-weight:normal;font-family:'Liberation Sans', sans-serif;left:386.50px;width:10px;text-align:center;">-</div>
<div class="t" style="top:330.39px;font-size:8.4px;color:#111;font-weight:normal;font-family:'Liberation Sans', sans-serif;left:408.20px;width:80px;text-align:right;">1920779</div>
<div class="t" style="top:330.39px;font-size:8.4px;color:#111;font-weight:normal;font-family:'Liberation Sans', sans-serif;left:474.70px;width:80px;text-align:right;">225961</div>
<div class="t" style="top:330.39px;font-size:8.4px;color:#111;font-weight:normal;font-family:'Liberation Sans', sans-serif;left:541.20px;width:80px;text-align:right;">589035</div>
<div class="t" style="top:330.39px;font-size:8.4px;color:#111;font-weight:normal;font-family:'Liberation Sans', sans-serif;left:580.20px;width:80px;text-align:right;">107910</div>
<div class="t" style="top:330.39px;font-size:8.4px;color:#111;font-weight:normal;font-family:'Liberation Sans', sans-serif;left:637.20px;width:80px;text-align:right;">16771</div>
<div class="t" style="top:330.39px;font-size:8.4px;color:#111;font-weight:normal;font-family:'Liberation Sans', sans-serif;left:686.20px;width:80px;text-align:right;">221288</div>
<div class="t" style="top:330.39px;font-size:8.4px;color:#111;font-weight:normal;font-family:'Liberation Sans', sans-serif;left:815.70px;width:80px;text-align:right;">418675</div>
<div class="t" style="top:330.39px;font-size:8.4px;color:#111;font-weight:normal;font-family:'Liberation Sans', sans-serif;left:894.20px;width:80px;text-align:right;">3102878</div>
<div class="t" style="top:343.63px;font-size:9.3px;color:#111;font-weight:normal;font-family:'Liberation Sans', sans-serif;left:1.40px;">County</div>
<div class="t" style="top:343.63px;font-size:9.3px;color:#111;font-weight:normal;font-family:'Liberation Sans', sans-serif;left:51.70px;">Edgecombe</div>
<div class="t" style="top:344.39px;font-size:8.4px;color:#111;font-weight:normal;font-family:'Liberation Sans', sans-serif;left:120.70px;width:80px;text-align:right;">34059</div>
<div class="t" style="top:344.39px;font-size:8.4px;color:#111;font-weight:normal;font-family:'Liberation Sans', sans-serif;left:198.50px;width:80px;text-align:right;">2264</div>
<div class="t" style="top:344.39px;font-size:8.4px;color:#111;font-weight:normal;font-family:'Liberation Sans', sans-serif;left:262.60px;width:80px;text-align:right;">20199</div>
<div class="t" style="top:344.39px;font-size:8.4px;color:#111;font-weight:normal;font-family:'Liberation Sans', sans-serif;left:314.70px;width:80px;text-align:right;">119</div>
<div class="t" style="top:344.39px;font-size:8.4px;color:#111;font-weight:normal;font-family:'Liberation Sans', sans-serif;left:408.20px;width:80px;text-align:right;">56641</div>
<div class="t" style="top:344.39px;font-size:8.4px;color:#111;font-weight:normal;font-family:'Liberation Sans', sans-serif;left:474.70px;width:80px;text-align:right;">1171</div>
<div class="t" style="top:344.39px;font-size:8.4px;color:#111;font-weight:normal;font-family:'Liberation Sans', sans-serif;left:541.20px;width:80px;text-align:right;">807</div>
<div class="t" style="top:344.39px;font-size:8.4px;color:#111;font-weight:normal;font-family:'Liberation Sans', sans-serif;left:580.20px;width:80px;text-align:right;">328</div>
<div class="t" style="top:344.39px;font-size:8.4px;color:#111;font-weight:normal;font-family:'Liberation Sans', sans-serif;left:709.00px;width:10px;text-align:center;">-</div>
<div class="t" style="top:344.39px;font-size:8.4px;color:#111;font-weight:normal;font-family:'Liberation Sans', sans-serif;left:686.20px;width:80px;text-align:right;">15266</div>
<div class="t" style="top:344.39px;font-size:8.4px;color:#111;font-weight:normal;font-family:'Liberation Sans', sans-serif;left:815.70px;width:80px;text-align:right;">15731</div>
<div class="t" style="top:344.39px;font-size:8.4px;color:#111;font-weight:normal;font-family:'Liberation Sans', sans-serif;left:894.20px;width:80px;text-align:right;">74213</div>
<div class="t" style="top:356.63px;font-size:9.3px;color:#111;font-weight:normal;font-family:'Liberation Sans', sans-serif;left:1.40px;">County</div>
<div class="t" style="top:356.63px;font-size:9.3px;color:#111;font-weight:normal;font-family:'Liberation Sans', sans-serif;left:51.70px;">Forsyth</div>
<div class="t" style="top:357.39px;font-size:8.4px;color:#111;font-weight:normal;font-family:'Liberation Sans', sans-serif;left:120.70px;width:80px;text-align:right;">509785</div>
<div class="t" style="top:357.39px;font-size:8.4px;color:#111;font-weight:normal;font-family:'Liberation Sans', sans-serif;left:198.50px;width:80px;text-align:right;">39725</div>
<div class="t" style="top:357.39px;font-size:8.4px;color:#111;font-weight:normal;font-family:'Liberation Sans', sans-serif;left:262.60px;width:80px;text-align:right;">414467</div>
<div class="t" style="top:357.39px;font-size:8.4px;color:#111;font-weight:normal;font-family:'Liberation Sans', sans-serif;left:314.70px;width:80px;text-align:right;">18149</div>
<div class="t" style="top:357.39px;font-size:8.4px;color:#111;font-weight:normal;font-family:'Liberation Sans', sans-serif;left:408.20px;width:80px;text-align:right;">1082936</div>
<div class="t" style="top:357.39px;font-size:8.4px;color:#111;font-weight:normal;font-family:'Liberation Sans', sans-serif;left:474.70px;width:80px;text-align:right;">140765</div>
<div class="t" style="top:357.39px;font-size:8.4px;color:#111;font-weight:normal;font-family:'Liberation Sans', sans-serif;left:541.20px;width:80px;text-align:right;">196005</div>
<div class="t" style="top:357.39px;font-size:8.4px;color:#111;font-weight:normal;font-family:'Liberation Sans', sans-serif;left:580.20px;width:80px;text-align:right;">113073</div>
<div class="t" style="top:357.39px;font-size:8.4px;color:#111;font-weight:normal;font-family:'Liberation Sans', sans-serif;left:637.20px;width:80px;text-align:right;">2070</div>
<div class="t" style="top:357.39px;font-size:8.4px;color:#111;font-weight:normal;font-family:'Liberation Sans', sans-serif;left:686.20px;width:80px;text-align:right;">456325</div>
<div class="t" style="top:357.39px;font-size:8.4px;color:#111;font-weight:normal;font-family:'Liberation Sans', sans-serif;left:815.70px;width:80px;text-align:right;">631081</div>
<div class="t" style="top:357.39px;font-size:8.4px;color:#111;font-weight:normal;font-family:'Liberation Sans', sans-serif;left:894.20px;width:80px;text-align:right;">1991202</div>
<div class="t" style="top:369.63px;font-size:9.3px;color:#111;font-weight:normal;font-family:'Liberation Sans', sans-serif;left:1.40px;">County</div>
<div class="t" style="top:369.63px;font-size:9.3px;color:#111;font-weight:normal;font-family:'Liberation Sans', sans-serif;left:51.70px;">Franklin</div>
<div class="t" style="top:370.39px;font-size:8.4px;color:#111;font-weight:normal;font-family:'Liberation Sans', sans-serif;left:120.70px;width:80px;text-align:right;">48474</div>
<div class="t" style="top:370.39px;font-size:8.4px;color:#111;font-weight:normal;font-family:'Liberation Sans', sans-serif;left:270.30px;width:10px;text-align:center;">-</div>
<div class="t" style="top:370.39px;font-size:8.4px;color:#111;font-weight:normal;font-family:'Liberation Sans', sans-serif;left:262.60px;width:80px;text-align:right;">50864</div>
<div class="t" style="top:370.39px;font-size:8.4px;color:#111;font-weight:normal;font-family:'Liberation Sans', sans-serif;left:314.70px;width:80px;text-align:right;">1821</div>
<div class="t" style="top:370.39px;font-size:8.4px;color:#111;font-weight:normal;font-family:'Liberation Sans', sans-serif;left:408.20px;width:80px;text-align:right;">106780</div>
<div class="t" style="top:370.39px;font-size:8.4px;color:#111;font-weight:normal;font-family:'Liberation Sans', sans-serif;left:474.70px;width:80px;text-align:right;">15749</div>
<div class="t" style="top:370.39px;font-size:8.4px;color:#111;font-weight:normal;font-family:'Liberation Sans', sans-serif;left:541.20px;width:80px;text-align:right;">15564</div>
<div class="t" style="top:370.39px;font-size:8.4px;color:#111;font-weight:normal;font-family:'Liberation Sans', sans-serif;left:580.20px;width:80px;text-align:right;">6462</div>
<div class="t" style="top:370.39px;font-size:8.4px;color:#111;font-weight:normal;font-family:'Liberation Sans', sans-serif;left:709.00px;width:10px;text-align:center;">-</div>
<div class="t" style="top:370.39px;font-size:8.4px;color:#111;font-weight:normal;font-family:'Liberation Sans', sans-serif;left:686.20px;width:80px;text-align:right;">7324</div>
<div class="t" style="top:370.39px;font-size:8.4px;color:#111;font-weight:normal;font-family:'Liberation Sans', sans-serif;left:815.70px;width:80px;text-align:right;">14856</div>
<div class="t" style="top:370.39px;font-size:8.4px;color:#111;font-weight:normal;font-family:'Liberation Sans', sans-serif;left:894.20px;width:80px;text-align:right;">179603</div>
<div class="t" style="top:383.63px;font-size:9.3px;color:#111;font-weight:normal;font-family:'Liberation Sans', sans-serif;left:1.40px;">County</div>
<div class="t" style="top:383.63px;font-size:9.3px;color:#111;font-weight:normal;font-family:'Liberation Sans', sans-serif;left:51.70px;">Gaston</div>
<div class="t" style="top:384.39px;font-size:8.4px;color:#111;font-weight:normal;font-family:'Liberation Sans', sans-serif;left:120.70px;width:80px;text-align:right;">350358</div>
<div class="t" style="top:384.39px;font-size:8.4px;color:#111;font-weight:normal;font-family:'Liberation Sans', sans-serif;left:198.50px;width:80px;text-align:right;">43516</div>
<div class="t" style="top:384.39px;font-size:8.4px;color:#111;font-weight:normal;font-family:'Liberation Sans', sans-serif;left:262.60px;width:80px;text-align:right;">356613</div>
<div class="t" style="top:384.39px;font-size:8.4px;color:#111;font-weight:normal;font-family:'Liberation Sans', sans-serif;left:386.50px;width:10px;text-align:center;">-</div>
<div class="t" style="top:384.39px;font-size:8.4px;color:#111;font-weight:normal;font-family:'Liberation Sans', sans-serif;left:408.20px;width:80px;text-align:right;">750487</div>
<div class="t" style="top:384.39px;font-size:8.4px;color:#111;font-weight:normal;font-family:'Liberation Sans', sans-serif;left:474.70px;width:80px;text-align:right;">64791</div>
<div class="t" style="top:384.39px;font-size:8.4px;color:#111;font-weight:normal;font-family:'Liberation Sans', sans-serif;left:541.20px;width:80px;text-align:right;">192849</div>
<div class="t" style="top:384.39px;font-size:8.4px;color:#111;font-weight:normal;font-family:'Liberation Sans', sans-serif;left:580.20px;width:80px;text-align:right;">48469</div>
<div class="t" style="top:384.39px;font-size:8.4px;color:#111;font-weight:normal;font-family:'Liberation Sans', sans-serif;left:637.20px;width:80px;text-align:right;">2556</div>
<div class="t" style="top:384.39px;font-size:8.4px;color:#111;font-weight:normal;font-family:'Liberation Sans', sans-serif;left:686.20px;width:80px;text-align:right;">134200</div>
<div class="t" style="top:384.39px;font-size:8.4px;color:#111;font-weight:normal;font-family:'Liberation Sans', sans-serif;left:815.70px;width:80px;text-align:right;">208310</div>
<div class="t" style="top:384.39px;font-size:8.4px;color:#111;font-weight:normal;font-family:'Liberation Sans', sans-serif;left:894.20px;width:80px;text-align:right;">1196374</div>
<div class="t" style="top:396.63px;font-size:9.3px;color:#111;font-weight:normal;font-family:'Liberation Sans', sans-serif;left:1.40px;">County</div>
<div class="t" style="top:396.63px;font-size:9.3px;color:#111;font-weight:normal;font-family:'Liberation Sans', sans-serif;left:51.70px;">Granville</div>
<div class="t" style="top:397.39px;font-size:8.4px;color:#111;font-weight:normal;font-family:'Liberation Sans', sans-serif;left:120.70px;width:80px;text-align:right;">53120</div>
<div class="t" style="top:397.39px;font-size:8.4px;color:#111;font-weight:normal;font-family:'Liberation Sans', sans-serif;left:198.50px;width:80px;text-align:right;">6436</div>
<div class="t" style="top:397.39px;font-size:8.4px;color:#111;font-weight:normal;font-family:'Liberation Sans', sans-serif;left:262.60px;width:80px;text-align:right;">48211</div>
<div class="t" style="top:397.39px;font-size:8.4px;color:#111;font-weight:normal;font-family:'Liberation Sans', sans-serif;left:314.70px;width:80px;text-align:right;">1286</div>
<div class="t" style="top:397.39px;font-size:8.4px;color:#111;font-weight:normal;font-family:'Liberation Sans', sans-serif;left:408.20px;width:80px;text-align:right;">109053</div>
<div class="t" style="top:397.39px;font-size:8.4px;color:#111;font-weight:normal;font-family:'Liberation Sans', sans-serif;left:474.70px;width:80px;text-align:right;">4864</div>
<div class="t" style="top:397.39px;font-size:8.4px;color:#111;font-weight:normal;font-family:'Liberation Sans', sans-serif;left:541.20px;width:80px;text-align:right;">23001</div>
<div class="t" style="top:397.39px;font-size:8.4px;color:#111;font-weight:normal;font-family:'Liberation Sans', sans-serif;left:580.20px;width:80px;text-align:right;">10908</div>
<div class="t" style="top:397.39px;font-size:8.4px;color:#111;font-weight:normal;font-family:'Liberation Sans', sans-serif;left:709.00px;width:10px;text-align:center;">-</div>
<div class="t" style="top:397.39px;font-size:8.4px;color:#111;font-weight:normal;font-family:'Liberation Sans', sans-serif;left:686.20px;width:80px;text-align:right;">12791</div>
<div class="t" style="top:397.39px;font-size:8.4px;color:#111;font-weight:normal;font-family:'Liberation Sans', sans-serif;left:815.70px;width:80px;text-align:right;">24807</div>
<div class="t" style="top:397.39px;font-size:8.4px;color:#111;font-weight:normal;font-family:'Liberation Sans', sans-serif;left:894.20px;width:80px;text-align:right;">161651</div>
<div class="t" style="top:409.63px;font-size:9.3px;color:#111;font-weight:normal;font-family:'Liberation Sans', sans-serif;left:1.40px;">County</div>
<div class="t" style="top:409.63px;font-size:9.3px;color:#111;font-weight:normal;font-family:'Liberation Sans', sans-serif;left:51.70px;">Guilford (Greensboro)</div>
<div class="t" style="top:410.39px;font-size:8.4px;color:#111;font-weight:normal;font-family:'Liberation Sans', sans-serif;left:120.70px;width:80px;text-align:right;">375357</div>
<div class="t" style="top:410.39px;font-size:8.4px;color:#111;font-weight:normal;font-family:'Liberation Sans', sans-serif;left:198.50px;width:80px;text-align:right;">63810</div>
<div class="t" style="top:410.39px;font-size:8.4px;color:#111;font-weight:normal;font-family:'Liberation Sans', sans-serif;left:262.60px;width:80px;text-align:right;">658763</div>
<div class="t" style="top:410.39px;font-size:8.4px;color:#111;font-weight:normal;font-family:'Liberation Sans', sans-serif;left:386.50px;width:10px;text-align:center;">-</div>
<div class="t" style="top:410.39px;font-size:8.4px;color:#111;font-weight:normal;font-family:'Liberation Sans', sans-serif;left:408.20px;width:80px;text-align:right;">1097930</div>
<div class="t" style="top:410.39px;font-size:8.4px;color:#111;font-weight:normal;font-family:'Liberation Sans', sans-serif;left:474.70px;width:80px;text-align:right;">147051</div>
<div class="t" style="top:410.39px;font-size:8.4px;color:#111;font-weight:normal;font-family:'Liberation Sans', sans-serif;left:541.20px;width:80px;text-align:right;">301423</div>
<div class="t" style="top:410.39px;font-size:8.4px;color:#111;font-weight:normal;font-family:'Liberation Sans', sans-serif;left:580.20px;width:80px;text-align:right;">201514</div>
<div class="t" style="top:410.39px;font-size:8.4px;color:#111;font-weight:normal;font-family:'Liberation Sans', sans-serif;left:637.20px;width:80px;text-align:right;">3308</div>
<div class="t" style="top:410.39px;font-size:8.4px;color:#111;font-weight:normal;font-family:'Liberation Sans', sans-serif;left:686.20px;width:80px;text-align:right;">365169</div>
<div class="t" style="top:410.39px;font-size:8.4px;color:#111;font-weight:normal;font-family:'Liberation Sans', sans-serif;left:815.70px;width:80px;text-align:right;">664420</div>
<div class="t" style="top:410.39px;font-size:8.4px;color:#111;font-weight:normal;font-family:'Liberation Sans', sans-serif;left:894.20px;width:80px;text-align:right;">2116395</div>
<div class="t" style="top:423.63px;font-size:9.3px;color:#111;font-weight:normal;font-family:'Liberation Sans', sans-serif;left:1.40px;">County</div>
<div class="t" style="top:423.63px;font-size:9.3px;color:#111;font-weight:normal;font-family:'Liberation Sans', sans-serif;left:51.70px;">Halifax</div>
<div class="t" style="top:424.39px;font-size:8.4px;color:#111;font-weight:normal;font-family:'Liberation Sans', sans-serif;left:120.70px;width:80px;text-align:right;">90088</div>
<div class="t" style="top:424.39px;font-size:8.4px;color:#111;font-weight:normal;font-family:'Liberation Sans', sans-serif;left:198.50px;width:80px;text-align:right;">527</div>
<div class="t" style="top:424.39px;font-size:8.4px;color:#111;font-weight:normal;font-family:'Liberation Sans', sans-serif;left:262.60px;width:80px;text-align:right;">9761</div>
<div class="t" style="top:424.39px;font-size:8.4px;color:#111;font-weight:normal;font-family:'Liberation Sans', sans-serif;left:314.70px;width:80px;text-align:right;">357</div>
<div class="t" style="top:424.39px;font-size:8.4px;color:#111;font-weight:normal;font-family:'Liberation Sans', sans-serif;left:408.20px;width:80px;text-align:right;">100733</div>
<div class="t" style="top:424.39px;font-size:8.4px;color:#111;font-weight:normal;font-family:'Liberation Sans', sans-serif;left:474.70px;width:80px;text-align:right;">981</div>
<div class="t" style="top:424.39px;font-size:8.4px;color:#111;font-weight:normal;font-family:'Liberation Sans', sans-serif;left:541.20px;width:80px;text-align:right;">202</div>
<div class="t" style="top:424.39px;font-size:8.4px;color:#111;font-weight:normal;font-family:'Liberation Sans', sans-serif;left:580.20px;width:80px;text-align:right;">38</div>
<div class="t" style="top:424.39px;font-size:8.4px;color:#111;font-weight:normal;font-family:'Liberation Sans', sans-serif;left:709.00px;width:10px;text-align:center;">-</div>
<div class="t" style="top:424.39px;font-size:8.4px;color:#111;font-weight:normal;font-family:'Liberation Sans', sans-serif;left:686.20px;width:80px;text-align:right;">5276</div>
<div class="t" style="top:424.39px;font-size:8.4px;color:#111;font-weight:normal;font-family:'Liberation Sans', sans-serif;left:815.70px;width:80px;text-align:right;">5314</div>
<div class="t" style="top:424.39px;font-size:8.4px;color:#111;font-weight:normal;font-family:'Liberation Sans', sans-serif;left:894.20px;width:80px;text-align:right;">107230</div>
<div class="t" style="top:436.63px;font-size:9.3px;color:#111;font-weight:normal;font-family:'Liberation Sans', sans-serif;left:1.40px;">County</div>
<div class="t" style="top:436.63px;font-size:9.3px;color:#111;font-weight:normal;font-family:'Liberation Sans', sans-serif;left:51.70px;">Harnett</div>
<div class="t" style="top:437.39px;font-size:8.4px;color:#111;font-weight:normal;font-family:'Liberation Sans', sans-serif;left:120.70px;width:80px;text-align:right;">78903</div>
<div class="t" style="top:437.39px;font-size:8.4px;color:#111;font-weight:normal;font-family:'Liberation Sans', sans-serif;left:198.50px;width:80px;text-align:right;">7131</div>
<div class="t" style="top:437.39px;font-size:8.4px;color:#111;font-weight:normal;font-family:'Liberation Sans', sans-serif;left:262.60px;width:80px;text-align:right;">130151</div>
<div class="t" style="top:437.39px;font-size:8.4px;color:#111;font-weight:normal;font-family:'Liberation Sans', sans-serif;left:314.70px;width:80px;text-align:right;">963</div>
<div class="t" style="top:437.39px;font-size:8.4px;color:#111;font-weight:normal;font-family:'Liberation Sans', sans-serif;left:408.20px;width:80px;text-align:right;">218075</div>
<div class="t" style="top:437.39px;font-size:8.4px;color:#111;font-weight:normal;font-family:'Liberation Sans', sans-serif;left:474.70px;width:80px;text-align:right;">13545</div>
<div class="t" style="top:437.39px;font-size:8.4px;color:#111;font-weight:normal;font-family:'Liberation Sans', sans-serif;left:541.20px;width:80px;text-align:right;">31224</div>
<div class="t" style="top:437.39px;font-size:8.4px;color:#111;font-weight:normal;font-family:'Liberation Sans', sans-serif;left:580.20px;width:80px;text-align:right;">12570</div>
<div class="t" style="top:437.39px;font-size:8.4px;color:#111;font-weight:normal;font-family:'Liberation Sans', sans-serif;left:709.00px;width:10px;text-align:center;">-</div>
<div class="t" style="top:437.39px;font-size:8.4px;color:#111;font-weight:normal;font-family:'Liberation Sans', sans-serif;left:686.20px;width:80px;text-align:right;">62380</div>
<div class="t" style="top:437.39px;font-size:8.4px;color:#111;font-weight:normal;font-family:'Liberation Sans', sans-serif;left:815.70px;width:80px;text-align:right;">80337</div>
<div class="t" style="top:437.39px;font-size:8.4px;color:#111;font-weight:normal;font-family:'Liberation Sans', sans-serif;left:894.20px;width:80px;text-align:right;">338350</div>
<div class="t" style="top:449.63px;font-size:9.3px;color:#111;font-weight:normal;font-family:'Liberation Sans', sans-serif;left:1.40px;">County</div>
<div class="t" style="top:449.63px;font-size:9.3px;color:#111;font-weight:normal;font-family:'Liberation Sans', sans-serif;left:51.70px;">Haywood</div>
<div class="t" style="top:450.39px;font-size:8.4px;color:#111;font-weight:normal;font-family:'Liberation Sans', sans-serif;left:120.70px;width:80px;text-align:right;">139324</div>
<div class="t" style="top:450.39px;font-size:8.4px;color:#111;font-weight:normal;font-family:'Liberation Sans', sans-serif;left:198.50px;width:80px;text-align:right;">5029</div>
<div class="t" style="top:450.39px;font-size:8.4px;color:#111;font-weight:normal;font-family:'Liberation Sans', sans-serif;left:262.60px;width:80px;text-align:right;">62021</div>
<div class="t" style="top:450.39px;font-size:8.4px;color:#111;font-weight:normal;font-family:'Liberation Sans', sans-serif;left:314.70px;width:80px;text-align:right;">4692</div>
<div class="t" style="top:450.39px;font-size:8.4px;color:#111;font-weight:normal;font-family:'Liberation Sans', sans-serif;left:408.20px;width:80px;text-align:right;">211585</div>
<div class="t" style="top:450.39px;font-size:8.4px;color:#111;font-weight:normal;font-family:'Liberation Sans', sans-serif;left:474.70px;width:80px;text-align:right;">35356</div>
<div class="t" style="top:450.39px;font-size:8.4px;color:#111;font-weight:normal;font-family:'Liberation Sans', sans-serif;left:541.20px;width:80px;text-align:right;">56207</div>
<div class="t" style="top:450.39px;font-size:8.4px;color:#111;font-weight:normal;font-family:'Liberation Sans', sans-serif;left:580.20px;width:80px;text-align:right;">19262</div>
<div class="t" style="top:450.39px;font-size:8.4px;color:#111;font-weight:normal;font-family:'Liberation Sans', sans-serif;left:637.20px;width:80px;text-align:right;">434</div>
<div class="t" style="top:450.39px;font-size:8.4px;color:#111;font-weight:normal;font-family:'Liberation Sans', sans-serif;left:686.20px;width:80px;text-align:right;">21271</div>
<div class="t" style="top:450.39px;font-size:8.4px;color:#111;font-weight:normal;font-family:'Liberation Sans', sans-serif;left:815.70px;width:80px;text-align:right;">51457</div>
<div class="t" style="top:450.39px;font-size:8.4px;color:#111;font-weight:normal;font-family:'Liberation Sans', sans-serif;left:894.20px;width:80px;text-align:right;">344360</div>
<div class="t" style="top:463.63px;font-size:9.3px;color:#111;font-weight:normal;font-family:'Liberation Sans', sans-serif;left:1.40px;">County</div>
<div class="t" style="top:463.63px;font-size:9.3px;color:#111;font-weight:normal;font-family:'Liberation Sans', sans-serif;left:51.70px;">Henderson</div>
<div class="t" style="top:464.39px;font-size:8.4px;color:#111;font-weight:normal;font-family:'Liberation Sans', sans-serif;left:120.70px;width:80px;text-align:right;">349986</div>
<div class="t" style="top:464.39px;font-size:8.4px;color:#111;font-weight:normal;font-family:'Liberation Sans', sans-serif;left:198.50px;width:80px;text-align:right;">22144</div>
<div class="t" style="top:464.39px;font-size:8.4px;color:#111;font-weight:normal;font-family:'Liberation Sans', sans-serif;left:262.60px;width:80px;text-align:right;">202720</div>
<div class="t" style="top:464.39px;font-size:8.4px;color:#111;font-weight:normal;font-family:'Liberation Sans', sans-serif;left:314.70px;width:80px;text-align:right;">3631</div>
<div class="t" style="top:464.39px;font-size:8.4px;color:#111;font-weight:normal;font-family:'Liberation Sans', sans-serif;left:408.20px;width:80px;text-align:right;">578481</div>
<div class="t" style="top:464.39px;font-size:8.4px;color:#111;font-weight:normal;font-family:'Liberation Sans', sans-serif;left:474.70px;width:80px;text-align:right;">84504</div>
<div class="t" style="top:464.39px;font-size:8.4px;color:#111;font-weight:normal;font-family:'Liberation Sans', sans-serif;left:541.20px;width:80px;text-align:right;">211877</div>
<div class="t" style="top:464.39px;font-size:8.4px;color:#111;font-weight:normal;font-family:'Liberation Sans', sans-serif;left:580.20px;width:80px;text-align:right;">51511</div>
<div class="t" style="top:464.39px;font-size:8.4px;color:#111;font-weight:normal;font-family:'Liberation Sans', sans-serif;left:637.20px;width:80px;text-align:right;">673</div>
<div class="t" style="top:464.39px;font-size:8.4px;color:#111;font-weight:normal;font-family:'Liberation Sans', sans-serif;left:686.20px;width:80px;text-align:right;">83508</div>
<div class="t" style="top:464.39px;font-size:8.4px;color:#111;font-weight:normal;font-family:'Liberation Sans', sans-serif;left:815.70px;width:80px;text-align:right;">163618</div>
<div class="t" style="top:464.39px;font-size:8.4px;color:#111;font-weight:normal;font-family:'Liberation Sans', sans-serif;left:894.20px;width:80px;text-align:right;">1010554</div>
<div class="t" style="top:476.63px;font-size:9.3px;color:#111;font-weight:normal;font-family:'Liberation Sans', sans-serif;left:1.40px;">County</div>
<div class="t" style="top:476.63px;font-size:9.3px;color:#111;font-weight:normal;font-family:'Liberation Sans', sans-serif;left:51.70px;">Iredell</div>
<div class="t" style="top:477.39px;font-size:8.4px;color:#111;font-weight:normal;font-family:'Liberation Sans', sans-serif;left:120.70px;width:80px;text-align:right;">194103</div>
<div class="t" style="top:477.39px;font-size:8.4px;color:#111;font-weight:normal;font-family:'Liberation Sans', sans-serif;left:198.50px;width:80px;text-align:right;">17659</div>
<div class="t" style="top:477.39px;font-size:8.4px;color:#111;font-weight:normal;font-family:'Liberation Sans', sans-serif;left:262.60px;width:80px;text-align:right;">141560</div>
<div class="t" style="top:477.39px;font-size:8.4px;color:#111;font-weight:normal;font-family:'Liberation Sans', sans-serif;left:386.50px;width:10px;text-align:center;">-</div>
<div class="t" style="top:477.39px;font-size:8.4px;color:#111;font-weight:normal;font-family:'Liberation Sans', sans-serif;left:408.20px;width:80px;text-align:right;">354244</div>
<div class="t" style="top:477.39px;font-size:8.4px;color:#111;font-weight:normal;font-family:'Liberation Sans', sans-serif;left:474.70px;width:80px;text-align:right;">25057</div>
<div class="t" style="top:477.39px;font-size:8.4px;color:#111;font-weight:normal;font-family:'Liberation Sans', sans-serif;left:541.20px;width:80px;text-align:right;">53</div>
<div class="t" style="top:477.39px;font-size:8.4px;color:#111;font-weight:normal;font-family:'Liberation Sans', sans-serif;left:580.20px;width:80px;text-align:right;">23843</div>
<div class="t" style="top:477.39px;font-size:8.4px;color:#111;font-weight:normal;font-family:'Liberation Sans', sans-serif;left:637.20px;width:80px;text-align:right;">23801</div>
<div class="t" style="top:477.39px;font-size:8.4px;color:#111;font-weight:normal;font-family:'Liberation Sans', sans-serif;left:686.20px;width:80px;text-align:right;">42762</div>
<div class="t" style="top:477.39px;font-size:8.4px;color:#111;font-weight:normal;font-family:'Liberation Sans', sans-serif;left:815.70px;width:80px;text-align:right;">95605</div>
<div class="t" style="top:477.39px;font-size:8.4px;color:#111;font-weight:normal;font-family:'Liberation Sans', sans-serif;left:894.20px;width:80px;text-align:right;">469760</div>
</div>
<div class="r" style="left:1286.50px;top:186.00px;width:14.50px;height:495.00px;background:#6a6a6a;"></div>
<div class="r" style="left:1288.50px;top:197.00px;width:11.00px;height:475.00px;background:#575757;"></div>
<div class="r" style="left:1289.6px;top:187.6px;width:8.8px;height:8.7px;background:#a4a4a4;box-sizing:border-box;border:1px solid #4e4e4e;"></div>
<svg class="r" style="left:1289.6px;top:187.6px;" width="9" height="9" viewBox="0 0 9 9"><path d="M2.2 5.8 L6.6 5.8 L4.4 3.3 Z" fill="#222"/></svg>
<div class="r" style="left:1289.6px;top:197.2px;width:8.8px;height:160.7px;background:#9c9c9c;box-sizing:border-box;border:1px solid #4e4e4e;"></div>
<div class="r" style="left:1289.9px;top:672px;width:8px;height:8.3px;background:#a4a4a4;box-sizing:border-box;border:1px solid #4e4e4e;"></div>
<svg class="r" style="left:1289.9px;top:672px;" width="8" height="9" viewBox="0 0 8 9"><path d="M1.8 3.2 L6.2 3.2 L4 5.7 Z" fill="#222"/></svg>
<div class="r" style="left:21.00px;top:681.00px;width:1280.00px;height:18.00px;background:#686868;"></div>
<div class="r" style="left:21.00px;top:698.40px;width:1280.00px;height:1.90px;background:#4a4a4a;"></div>
<svg class="r" style="left:38px;top:686px;" width="8" height="8" viewBox="0 0 8 8"><path d="M5.5 1 L5.5 7 L2 4 Z" fill="#e8e8e8"/></svg>
<svg class="r" style="left:56px;top:686px;" width="8" height="8" viewBox="0 0 8 8"><path d="M2.5 1 L2.5 7 L6 4 Z" fill="#e8e8e8"/></svg>
<div class="r" style="left:75.00px;top:691.50px;width:1.50px;height:1.50px;background:#e4e4e4;"></div>
<div class="r" style="left:78.00px;top:691.50px;width:1.50px;height:1.50px;background:#e4e4e4;"></div>
<div class="r" style="left:81.00px;top:691.50px;width:1.50px;height:1.50px;background:#e4e4e4;"></div>
<div class="r" style="left:87.50px;top:684.00px;width:1.00px;height:12.50px;background:#8c8c8c;"></div>
<div class="r" style="left:411.40px;top:684.00px;width:1.00px;height:12.50px;background:#8c8c8c;"></div>
<div class="r" style="left:488.90px;top:684.00px;width:1.00px;height:12.50px;background:#8c8c8c;"></div>
<div class="r" style="left:566.90px;top:684.00px;width:1.00px;height:12.50px;background:#8c8c8c;"></div>
<div class="r" style="left:685.40px;top:684.00px;width:1.00px;height:12.50px;background:#8c8c8c;"></div>
<div class="r" style="left:209.20px;top:681.00px;width:116.10px;height:16.50px;background:#ffffff;"></div>
<div class="r" style="left:209.20px;top:695.60px;width:116.10px;height:1.90px;background:#217346;"></div>
<div class="t" style="top:685.89px;font-size:8.4px;color:#ececec;font-weight:normal;font-family:'Liberation Sans', sans-serif;left:78.35px;width:140px;text-align:center;">08.Filter Books Per Capita</div>
<div class="t" style="top:685.80px;font-size:8.5px;color:#217346;font-weight:bold;font-family:'Liberation Sans', sans-serif;left:197.00px;width:140px;text-align:center;">09.Filter Collection Type</div>
<div class="t" style="top:685.89px;font-size:8.4px;color:#ececec;font-weight:normal;font-family:'Liberation Sans', sans-serif;left:318.20px;width:100px;text-align:center;">10.Add comment</div>
<div class="t" style="top:685.89px;font-size:8.4px;color:#ececec;font-weight:normal;font-family:'Liberation Sans', sans-serif;left:400.30px;width:100px;text-align:center;">10.Chart 1 data</div>
<div class="t" style="top:685.89px;font-size:8.4px;color:#ececec;font-weight:normal;font-family:'Liberation Sans', sans-serif;left:478.10px;width:100px;text-align:center;">12.Chart 2 data</div>
<div class="t" style="top:685.89px;font-size:8.4px;color:#ececec;font-weight:normal;font-family:'Liberation Sans', sans-serif;left:556.40px;width:140px;text-align:center;">13.Electronic Technology</div>
<div class="r" style="left:697.8px;top:684px;width:46.5px;height:13px;overflow:hidden;">
<div class="t" style="top:1.89px;font-size:8.4px;color:#ececec;font-weight:normal;font-family:'Liberation Sans', sans-serif;left:0.00px;">14.Conditional Formatting</div>
</div>
<div class="r" style="left:749.00px;top:691.50px;width:1.50px;height:1.50px;background:#e4e4e4;"></div>
<div class="r" style="left:752.00px;top:691.50px;width:1.50px;height:1.50px;background:#e4e4e4;"></div>
<div class="r" style="left:755.00px;top:691.50px;width:1.50px;height:1.50px;background:#e4e4e4;"></div>
<div class="r" style="left:764.6px;top:684.7px;width:11.4px;height:11.4px;border-radius:50%;box-sizing:border-box;border:1.3px solid #f2f2f2;"></div>
<div class="r" style="left:766.90px;top:689.80px;width:6.80px;height:1.20px;background:#f2f2f2;"></div>
<div class="r" style="left:769.70px;top:687.00px;width:1.20px;height:6.80px;background:#f2f2f2;"></div>
<div class="r" style="left:789.00px;top:686.70px;width:1.40px;height:1.40px;background:#eeeeee;"></div>
<div class="r" style="left:789.00px;top:689.70px;width:1.40px;height:1.40px;background:#eeeeee;"></div>
<div class="r" style="left:789.00px;top:692.70px;width:1.40px;height:1.40px;background:#eeeeee;"></div>
<div class="r" style="left:800.50px;top:685.80px;width:485.50px;height:9.70px;background:#575757;"></div>
<div class="r" style="left:800.5px;top:685.8px;width:9.4px;height:9.7px;background:#a4a4a4;box-sizing:border-box;border:1px solid #4e4e4e;"></div>
<svg class="r" style="left:800.5px;top:685.8px;" width="10" height="10" viewBox="0 0 10 10"><path d="M6 2.6 L6 7.2 L3.4 4.9 Z" fill="#222"/></svg>
<div class="r" style="left:810.5px;top:685.8px;width:438.7px;height:9.7px;background:#9c9c9c;box-sizing:border-box;border:1px solid #4e4e4e;"></div>
<div class="r" style="left:1277.8px;top:685.8px;width:8.4px;height:9.7px;background:#a4a4a4;box-sizing:border-box;border:1px solid #4e4e4e;"></div>
<svg class="r" style="left:1277.8px;top:685.8px;" width="9" height="10" viewBox="0 0 9 10"><path d="M3 2.6 L3 7.2 L5.6 4.9 Z" fill="#222"/></svg>
<div class="r" style="left:21.00px;top:700.30px;width:1280.00px;height:13.70px;background:#c5c2bf;"></div>
<div class="t" style="top:703.24px;font-size:7.4px;color:#333;font-weight:normal;font-family:'Liberation Sans', sans-serif;left:25.70px;">Ready</div>
<div class="t" style="top:702.98px;font-size:7.7px;color:#333;font-weight:normal;font-family:'Liberation Sans', sans-serif;left:1065.20px;">Count: 14</div>
<div class="r" style="left:1110.60px;top:700.30px;width:25.10px;height:13.70px;background:#a09e9c;"></div>
<div class="t" style="top:703.17px;font-size:7.6px;color:#333;font-weight:normal;font-family:'Liberation Sans', sans-serif;left:1256.00px;width:40px;text-align:right;">100%</div>
<div class="r" style="left:1196.00px;top:706.60px;width:66.00px;height:0.70px;background:#8a8886;"></div>
<div class="r" style="left:1228.60px;top:703.30px;width:3.00px;height:7.20px;background:#6d6b69;"></div>
<div class="r" style="left:1188.50px;top:706.40px;width:5.00px;height:1.10px;background:#f5f5f5;"></div>
<div class="r" style="left:1264.50px;top:706.40px;width:6.00px;height:1.20px;background:#f5f5f5;"></div>
<div class="r" style="left:1266.90px;top:704.00px;width:1.20px;height:6.00px;background:#f5f5f5;"></div>
<svg class="r" style="left:1110px;top:700px;" width="70" height="14" viewBox="0 0 70 14"><g fill="none" stroke="#f4f4f4" stroke-width="0.9"><rect x="8.8" y="2.8" width="8" height="8"/><path d="M11.5 2.8 v8 M14.2 2.8 v8 M8.8 5.5 h8 M8.8 8.2 h8"/><rect x="33.4" y="2.8" width="9.2" height="8"/><rect x="35.4" y="4.3" width="5.2" height="5"/><path d="M59.6 2.8 v8 h8.4 v-8"/></g><rect x="63.4" y="2.8" width="2.6" height="5" fill="#f4f4f4"/><path d="M59.6 8 h8.4" stroke="#f4f4f4" stroke-width="0.9"/></svg>
<div class="r" style="left:564px;top:128.6px;width:215px;height:131.6px;background:#f0f0f0;box-shadow:0 0 0 1px #c8c8c8, 1px 2px 3px rgba(0,0,0,0.35);"></div>
<div class="t" style="top:134.77px;font-size:7.95px;color:#333;font-weight:bold;font-family:'Liberation Sans', sans-serif;left:571.80px;">Filter (Ctrl+Shift+L)</div>
<div class="t" style="top:151.84px;font-size:8.1px;color:#333;font-weight:normal;font-family:'Liberation Sans', sans-serif;left:643.80px;">Turn on filtering for the selected</div>
<div class="t" style="top:161.84px;font-size:8.1px;color:#333;font-weight:normal;font-family:'Liberation Sans', sans-serif;left:643.80px;">cells.</div>
<div class="t" style="top:181.74px;font-size:8.1px;color:#333;font-weight:normal;font-family:'Liberation Sans', sans-serif;left:643.80px;">Then, click the arrow in the column</div>
<div class="t" style="top:191.74px;font-size:8.1px;color:#333;font-weight:normal;font-family:'Liberation Sans', sans-serif;left:643.80px;">header to narrow down the data.</div>
<svg class="r" style="left:575px;top:174px;" width="56" height="58" viewBox="0 0 56 58"><path d="M0.5 1.7 H53.9 V12.2 L33.4 32.4 V56.4 H21.3 V32.4 L0.5 12.2 Z" fill="#f2f4f4" stroke="#000" stroke-width="2.2" stroke-linejoin="miter"/></svg>
<div class="r" style="left:567.00px;top:239.40px;width:208.50px;height:0.90px;background:#c4c4c4;"></div>
<div class="r" style="left:571px;top:244.5px;width:10px;height:10px;border-radius:50%;box-sizing:border-box;border:1.1px solid #3c7bc7;"></div>
<div class="t" style="top:246.35px;font-size:7.5px;color:#3c7bc7;font-weight:normal;font-family:'Liberation Sans', sans-serif;left:571.00px;width:10px;text-align:center;">?</div>
<div class="t" style="top:247.27px;font-size:7.95px;color:#3c6fae;font-weight:bold;font-family:'Liberation Sans', sans-serif;left:587.20px;">Tell me more</div>
<svg class="r" style="left:0;top:0" width="1343" height="186" viewBox="0 0 1343 186"><rect x="109.5" y="27.5" width="10.6" height="10.6" rx="1.5" fill="none" stroke="#e9e9e9" stroke-width="1.1"/><path d="M112 28 v3 h5.5 v-3" fill="none" stroke="#e9e9e9" stroke-width="1"/><path d="M112 38 v-4.5 h2" fill="none" stroke="#e9e9e9" stroke-width="1"/><path d="M115 36.5 a2.5 2.5 0 1 1 4.2 0.5" fill="none" stroke="#e9e9e9" stroke-width="1.1"/><path d="M130 31 q4 -4 7 -1 q3 3 -2 8" fill="none" stroke="#e9e9e9" stroke-width="1.1"/><path d="M129.5 28 v3.5 h3.5" fill="none" stroke="#e9e9e9" stroke-width="1.1"/><path d="M162 31 q-4 -4 -7 -1 q-3 3 2 8" fill="none" stroke="#6e6e6e" stroke-width="1.1"/><path d="M162.5 28 v3.5 h-3.5" fill="none" stroke="#6e6e6e" stroke-width="1.1"/><path d="M174.8 31.5 a3.2 3.2 0 1 1 6 0" fill="none" stroke="#e9e9e9" stroke-width="1"/><path d="M177.8 29.8 v6" stroke="#e9e9e9" stroke-width="1.2"/><path d="M176.2 34.2 l-1 0.8 v1.8 q0 2 2.2 2 h2.4 q1.9 0 1.9 -2 v-2.4 l-3.5 -0.9" fill="none" stroke="#e9e9e9" stroke-width="1"/><rect x="195.5" y="28" width="10.5" height="10" fill="none" stroke="#e9e9e9" stroke-width="1.1"/><path d="M197 37 l7 -7.5 l1.5 1.5 l-7 7.5 z" fill="#e9e9e9"/><rect x="195.5" y="28" width="10.5" height="2" fill="#e9e9e9"/><path d="M142.2 31 h4 l-2 2.2 z" fill="#e9e9e9"/><path d="M186.9 31 h4 l-2 2.2 z" fill="#e9e9e9"/><path d="M209.6 31 h4 l-2 2.2 z" fill="#e9e9e9"/><path d="M165.3 31 h4 l-2 2.2 z" fill="#6e6e6e"/><path d="M223.8 30 h4" stroke="#e9e9e9" stroke-width="0.9"/><path d="M223.8 32 h4 l-2 2.2 z" fill="#e9e9e9"/><rect x="1189.5" y="28.8" width="8" height="6" fill="none" stroke="#e9e9e9" stroke-width="1"/><path d="M1191.5 33.5 l2 -2.5 l2 2.5 z" fill="#e9e9e9"/><path d="M1221.2 32.3 h6.6" stroke="#e9e9e9" stroke-width="1"/><rect x="1251.6" y="30.3" width="5.2" height="4.6" fill="none" stroke="#e9e9e9" stroke-width="1"/><path d="M1253.4 30.3 v-1.6 h5 v4.6 h-1.6" fill="none" stroke="#e9e9e9" stroke-width="1"/><path d="M1282.3 28 l7 7.4 M1289.3 28 l-7 7.4" stroke="#e9e9e9" stroke-width="1"/><path d="M734.5 31.8 h3.6 l-1.8 2 z" fill="#eee"/><circle cx="529.3" cy="52.6" r="3.3" fill="none" stroke="#333" stroke-width="1"/><path d="M527 55 l-3.8 3.8" stroke="#333" stroke-width="1.1"/><path d="M1253.8 52.5 v5 h6.2 v-2.5" fill="none" stroke="#333" stroke-width="1"/><path d="M1255.5 55.5 q0.5 -3.5 4 -3.5 v-1.6 l2.2 2.4 l-2.2 2.4 v-1.6 q-2.5 0 -4 1.9 z" fill="none" stroke="#333" stroke-width="0.9"/><path d="M33.5 72 v13.3 a6.6 2.6 0 0 0 13.2 0 v-13.3 z" fill="#f4f6f6" stroke="#3a3a3a" stroke-width="1"/><ellipse cx="40.1" cy="72" rx="6.6" ry="2.6" fill="#f4f6f6" stroke="#3a3a3a" stroke-width="1"/><rect x="40.5" y="78.3" width="10.5" height="10.2" fill="#fff" stroke="#3a3a3a" stroke-width="1"/><rect x="40.5" y="78.3" width="10.5" height="2.2" fill="#5a5a5a"/><path d="M40.5 83.2 h10.5 M40.5 85.9 h10.5 M44 80.5 v8 M47.5 80.5 v8" stroke="#8a8a8a" stroke-width="0.8"/><path d="M64.5 69.5 h9.3 l4 4 v14.2 h-13.3 z" fill="#f4f6f6" stroke="#3a3a3a" stroke-width="1"/><path d="M73.8 69.5 v4 h4" fill="none" stroke="#3a3a3a" stroke-width="1"/><rect x="73.2" y="77.5" width="9.2" height="11" fill="#fff" stroke="#3a3a3a" stroke-width="1"/><rect x="75" y="79.6" width="5.6" height="6.8" fill="#b9b9b9"/><path d="M95.5 69.5 h9.5 l4 4 v14.2 h-13.5 z" fill="#f4f6f6" stroke="#3a3a3a" stroke-width="1"/><path d="M105.0 69.5 v4 h4" fill="none" stroke="#3a3a3a" stroke-width="1"/><circle cx="108.3" cy="83.6" r="5" fill="#4a86d4"/><path d="M103.5 83.6 h9.6 M108.3 78.8 v9.6 M104.5 81 h7.6 M104.5 86.2 h7.6" stroke="#cfe0f5" stroke-width="0.6"/><ellipse cx="108.3" cy="83.6" rx="2.3" ry="4.8" fill="none" stroke="#cfe0f5" stroke-width="0.6"/><rect x="130.6" y="69.6" width="18" height="17.6" fill="#f4f6f6" stroke="#3a3a3a" stroke-width="1.2"/><rect x="131" y="70" width="17.2" height="3.4" fill="#fff"/><path d="M131 73.6 h17.4 M131 78.2 h17.4 M131 82.8 h17.4 M136.6 73.6 v13.6 M142.6 73.6 v13.6" stroke="#3a3a3a" stroke-width="0.9"/><path d="M132.6 71 h2.4 l-1.2 1.6z M138.6 71 h2.4 l-1.2 1.6z M144.6 71 h2.4 l-1.2 1.6z" fill="#4a86d4"/><path d="M131 80.5 h17.4" stroke="#a8a8a8" stroke-width="1"/><path d="M171.5 69.5 h9.3 l4 4 v14.2 h-13.3 z" fill="#f4f6f6" stroke="#3a3a3a" stroke-width="1"/><path d="M180.8 69.5 v4 h4" fill="none" stroke="#3a3a3a" stroke-width="1"/><circle cx="184.1" cy="83.6" r="4.6" fill="#fff" stroke="#4a86d4" stroke-width="1.3"/><path d="M183.5 81.2 v2.6 l1.8 1.2" fill="none" stroke="#444" stroke-width="0.8"/><path d="M216.5 69.5 h9.6 l4 4 v14.2 h-13.6 z" fill="#f4f6f6" stroke="#3a3a3a" stroke-width="1"/><path d="M226.1 69.5 v4 h4" fill="none" stroke="#3a3a3a" stroke-width="1"/><path d="M225.8 79 v8 a4.3 1.5 0 0 0 8.6 0 v-8 z" fill="#f4f6f6" stroke="#e59a5c" stroke-width="1.1"/><ellipse cx="230.1" cy="79" rx="4.3" ry="1.5" fill="#f4f6f6" stroke="#e59a5c" stroke-width="1.1"/><path d="M265.6 71.5 h2 v15.5 h-2 z" fill="#ddd" stroke="#3a3a3a" stroke-width="0.9"/><path d="M267.6 69.6 h8.8 l4 4 v13.8 h-12.8 z" fill="#f4f6f6" stroke="#3a3a3a" stroke-width="1"/><path d="M276.40000000000003 69.6 v4 h4" fill="none" stroke="#3a3a3a" stroke-width="1"/><path d="M274.3 82 a4.5 4.5 0 0 1 8.3 -1.3" fill="none" stroke="#2aa14e" stroke-width="1.4"/><path d="M283.2 78.3 v3.3 h-3.3 z" fill="#2aa14e"/><path d="M283 85.6 a4.5 4.5 0 0 1 -8.3 1.3" fill="none" stroke="#2aa14e" stroke-width="1.4"/><path d="M274 89.2 v-3.3 h3.3 z" fill="#2aa14e"/><rect x="289.8" y="69.6" width="10.4" height="8.6" rx="0.8" fill="#f4f6f6" stroke="#3a3a3a" stroke-width="1"/><rect x="296.3" y="70.4" width="2.6" height="7" fill="#4a86d4"/><path d="M289.8 70.4 h10.4" stroke="#3a3a3a" stroke-width="1"/><rect x="291.3" y="84.5" width="7.4" height="10" fill="#dad8d6" stroke="#a9a7a5" stroke-width="1"/><path d="M293 87.5 h1.5 M295.8 87.5 h1.5 M293 90.5 h1.5 M295.8 90.5 h1.5" stroke="#a9a7a5" stroke-width="1"/><path d="M291.3 100.6 h5.1 l2.5 2.5 v7.300000000000001 h-7.6 z" fill="#f4f6f6" stroke="#3a3a3a" stroke-width="0.9"/><path d="M296.40000000000003 100.6 v2.5 h2.5" fill="none" stroke="#3a3a3a" stroke-width="0.9"/><rect x="294.5" y="106.6" width="3.8" height="2.8" rx="1.2" fill="none" stroke="#4a86d4" stroke-width="1.1"/><rect x="297" y="107.6" width="3.8" height="2.8" rx="1.2" fill="none" stroke="#4a86d4" stroke-width="1.1"/><path d="M492.5 82 h9.8 M492.5 94.4 h9.8" stroke="#c4c2c0" stroke-width="1"/><path d="M495.6 76 h3.4 l-1.7 -1.8z" fill="#bdbbb9"/><path d="M495.6 87.5 h3.4 l-1.7 1.8z" fill="#bdbbb9"/><path d="M495.4 98.5 h3.8" stroke="#333" stroke-width="0.8"/><path d="M495.4 100.2 h3.8 l-1.9 2z" fill="#333"/><path d="M414.2 79.6 L423.3 74.6 L432.4 79.6 Z" fill="#fff" stroke="#3a3a3a" stroke-width="1"/><rect x="414.2" y="88" width="18.2" height="2.2" fill="#9c9c9c" stroke="#3a3a3a" stroke-width="0.8"/><path d="M416.5 80.5 v7 M420.2 80.5 v7 M424 80.5 v7 M427.8 80.5 v7 M431.3 80.5 v7" stroke="#3a3a3a" stroke-width="1.1"/><path d="M415 80.2 h16.6" stroke="#3a3a3a" stroke-width="0.9"/><path d="M459.5 76.5 l5.5 -2 l7 2 l6 -2 v13 l-6 2 l-7 -2 l-5.5 2 z" fill="#f4f6f6" stroke="#3a3a3a" stroke-width="1"/><path d="M465 74.5 v13 M472 76.5 v13" stroke="#3a3a3a" stroke-width="1"/><text x="516.8" y="78.6" font-family="Liberation Sans" font-size="6" font-weight="bold" fill="#4a86d4">A</text><text x="517" y="84.6" font-family="Liberation Sans" font-size="6" font-weight="bold" fill="#222">Z</text><path d="M525.5 73.8 v10.5 M523.2 82 l2.3 2.6 l2.3 -2.6" fill="none" stroke="#222" stroke-width="1"/><text x="517" y="99.8" font-family="Liberation Sans" font-size="6" font-weight="bold" fill="#222">Z</text><text x="516.8" y="105.6" font-family="Liberation Sans" font-size="6" font-weight="bold" fill="#4a86d4">A</text><path d="M525.5 95 v10.5 M523.2 103 l2.3 2.6 l2.3 -2.6" fill="none" stroke="#222" stroke-width="1"/><rect x="534.5" y="69.3" width="18.4" height="18.4" fill="#fff" stroke="#3a3a3a" stroke-width="1"/><rect x="534.5" y="69.3" width="18.4" height="2.2" fill="#b8b8b8" stroke="#3a3a3a" stroke-width="0.8"/><path d="M543.7 71.5 v16.2" stroke="#3a3a3a" stroke-width="1"/><text x="536.6" y="78.5" font-family="Liberation Sans" font-size="6.6" fill="#444">Z</text><text x="536.4" y="86" font-family="Liberation Sans" font-size="6.6" fill="#4a86d4">A</text><text x="545.6" y="78.5" font-family="Liberation Sans" font-size="6.6" fill="#4a86d4">A</text><text x="545.8" y="86" font-family="Liberation Sans" font-size="6.6" fill="#444">Z</text><path d="M568.6 70 h17.6 v3.0959999999999996 l-5.632000000000001 5.504 v8.6 h-6.336 v-8.6 l-5.632000000000001 -5.504 z" fill="#fdfdfd" stroke="#222" stroke-width="1.2" stroke-linejoin="miter"/><path d="M594 68.9 h10 v1.656 l-3.2 2.944 v4.6 h-3.5999999999999996 v-4.6 l-3.2 -2.944 z" fill="#d4d2d0" stroke="#a9a7a5" stroke-width="1" stroke-linejoin="miter"/><path d="M599.5 75 l3.5 3.5 M603 75 l-3.5 3.5" stroke="#a9a7a5" stroke-width="0.9"/><path d="M594 84.8 h10 v1.656 l-3.2 2.944 v4.6 h-3.5999999999999996 v-4.6 l-3.2 -2.944 z" fill="#d4d2d0" stroke="#a9a7a5" stroke-width="1" stroke-linejoin="miter"/><circle cx="601.5" cy="92" r="2" fill="none" stroke="#a9a7a5" stroke-width="0.9"/><path d="M594 100.8 h10 v1.656 l-3.2 2.944 v4.6 h-3.5999999999999996 v-4.6 l-3.2 -2.944 z" fill="#f7f7f7" stroke="#222" stroke-width="1" stroke-linejoin="miter"/><circle cx="601.8" cy="108.2" r="2.4" fill="#fff" stroke="#4a86d4" stroke-width="1.2"/><circle cx="601.8" cy="108.2" r="0.8" fill="#4a86d4"/><path d="M666 71.8 h8 M666 74.3 h8 M667.5 76.8 h6.5" stroke="#333" stroke-width="0.9"/><rect x="677.4" y="69.3" width="6.3" height="18" fill="#fff" stroke="#222" stroke-width="1"/><path d="M677.4 75.3 h6.3 M677.4 81.3 h6.3" stroke="#222" stroke-width="1"/><path d="M679 71.6 h3 M679 77.6 h3 M679 83.6 h3" stroke="#4a86d4" stroke-width="1.1"/><path d="M668.5 77.5 q-3 3 0 6.5 q1.5 1.5 4 1" fill="none" stroke="#4a86d4" stroke-width="1"/><path d="M671 83.5 l2 1.5 l-2 1.5" fill="none" stroke="#4a86d4" stroke-width="1"/><rect x="700" y="72.5" width="15.5" height="12.8" fill="#d8d6d4" stroke="#a9a7a5" stroke-width="1"/><path d="M700 76.5 h15.5 M700 80.8 h15.5 M706 72.5 v12.8 M711 72.5 v12.8" stroke="#a9a7a5" stroke-width="0.8"/><path d="M699.5 68.2 l-3.5 5.5 h3 l-2.5 5 l5 -6 h-3 l2.5 -4.5 z" fill="#bdbbb9" stroke="#a9a7a5" stroke-width="0.6"/><rect x="733.9" y="69.2" width="12.8" height="18.6" fill="#fff" stroke="#3a3a3a" stroke-width="1"/><rect x="734.4" y="69.7" width="11.8" height="5.4" fill="#4a86d4"/><rect x="734.4" y="81.9" width="11.8" height="5.4" fill="#4a86d4"/><path d="M733.9 75.3 h12.8 M733.9 81.7 h12.8" stroke="#3a3a3a" stroke-width="0.9"/><path d="M742.2 78.8 l8.5 9 M750.7 78.8 l-8.5 9" stroke="#e04a4a" stroke-width="1.1"/><rect x="772.5" y="70.3" width="15" height="4.6" fill="#fff" stroke="#3a3a3a" stroke-width="1.1"/><rect x="772.5" y="77.7" width="15" height="4.6" fill="#fff" stroke="#3a3a3a" stroke-width="1.1"/><path d="M785 72.8 l2 2 l4 -5" fill="none" stroke="#2aa14e" stroke-width="1.2"/><circle cx="787.8" cy="81.2" r="2.8" fill="#fff" stroke="#e04a4a" stroke-width="1.2"/><path d="M786 79.5 l3.6 3.6" stroke="#e04a4a" stroke-width="1"/><rect x="817.6" y="69.2" width="6.2" height="17.6" rx="1" fill="#fff" stroke="#3a3a3a" stroke-width="1"/><path d="M817.6 73.5 h6.2 M817.6 78 h6.2 M817.6 82.5 h6.2" stroke="#3a3a3a" stroke-width="0.9"/><path d="M819.5 78 h5.5 l1.5 -1.5 M825 78 l1.5 1.5" fill="none" stroke="#4a86d4" stroke-width="1"/><rect x="827.6" y="76" width="7" height="3.8" rx="1" fill="#dfe8f5" stroke="#4a86d4" stroke-width="1"/><rect x="864.3" y="75.6" width="6.5" height="5.5" fill="#dcdad8" stroke="#a9a7a5" stroke-width="1"/><rect x="875.8" y="69.2" width="6.5" height="6" fill="#dcdad8" stroke="#a9a7a5" stroke-width="1"/><rect x="875.8" y="80.6" width="6.5" height="6.2" fill="#dcdad8" stroke="#a9a7a5" stroke-width="1"/><path d="M870.8 78.3 h2 l3 -6 M872.8 78.3 l3 5.5" fill="none" stroke="#a9a7a5" stroke-width="0.9"/><path d="M915 69 h12 q4 0 4 4 v10.5 q0 4 -4 4 h-12 q-4 0 -4 -4 v-10.5 q0 -4 4 -4 z" fill="#6fb83f"/><path d="M915 69.6 q-3.4 0 -3.4 3.4" fill="none" stroke="#a9dc7e" stroke-width="1"/><path d="M919 73 v11 M923.5 73 v11 M927.5 73 v11 M919 77 h9 M919 80.5 h9" stroke="#e6f5da" stroke-width="0.8"/><path d="M914.5 76.5 v6 q0 1 1 1 h2" fill="none" stroke="#e6f5da" stroke-width="0.9"/><rect x="963.5" y="71.2" width="18" height="14.2" fill="#fff" stroke="#3a3a3a" stroke-width="1"/><rect x="963.5" y="71.2" width="6" height="4.7" fill="#3f8ad8"/><rect x="963.5" y="80.7" width="6" height="4.7" fill="#3f8ad8"/><path d="M963.5 75.9 h18 M963.5 80.7 h18 M969.5 71.2 v14.2 M975.5 71.2 v14.2" stroke="#3a3a3a" stroke-width="0.9"/><path d="M964.5 73.5 h3.5 M964.5 78.3 h3.5 M970.5 73.5 h3.5 M976.5 73.5 h3.5 M970.5 78.3 h3.5" stroke="#bbb" stroke-width="0.6"/><text x="976.3" y="88.6" font-family="Liberation Sans" font-size="12" font-weight="bold" fill="#3c7bc7" stroke="#fff" stroke-width="1.6" paint-order="stroke">?</text><rect x="997.5" y="69.2" width="18.6" height="14.6" rx="1" fill="#fff" stroke="#3a3a3a" stroke-width="1"/><path d="M997.5 73.5 h18.6 M997.5 77.8 h18.6 M1002.5 69.2 v14.6 M1007.5 69.2 v14.6 M1012 69.2 v14.6" stroke="#999" stroke-width="0.7"/><path d="M998.5 81 l3.5 -3 l3 1.5 l3 -3" fill="none" stroke="#4a86d4" stroke-width="1.1"/><path d="M1008 76.5 l3 -2 l3.5 -3" fill="none" stroke="#e04a4a" stroke-width="1.1"/><path d="M997.5 83.8 v2 h5 v-2" fill="#fff" stroke="#3a3a3a" stroke-width="1"/><path d="M1043.6 69.5 h-2 v17.5 h2" fill="none" stroke="#666" stroke-width="0.9"/><rect x="1048.1999999999998" y="69.2" width="8.2" height="17.8" rx="1" fill="#fff" stroke="#3a3a3a" stroke-width="1"/><path d="M1048.1999999999998 73.6 h8.2 M1048.1999999999998 78 h8.2 M1048.1999999999998 82.5 h8.2" stroke="#3a3a3a" stroke-width="0.8"/><rect x="1040" y="75.8" width="5.6" height="5" fill="#fff" stroke="#3a3a3a" stroke-width="0.9"/><path d="M1041.3 78.3 h3 M1042.8 76.8 v3" stroke="#4a86d4" stroke-width="0.9"/><path d="M1075.2 69.5 h-2 v17.5 h2" fill="none" stroke="#666" stroke-width="0.9"/><rect x="1079.8" y="69.2" width="8.2" height="17.8" rx="1" fill="#fff" stroke="#3a3a3a" stroke-width="1"/><path d="M1079.8 73.6 h8.2 M1079.8 78 h8.2 M1079.8 82.5 h8.2" stroke="#3a3a3a" stroke-width="0.8"/><rect x="1071.6" y="75.8" width="5.6" height="5" fill="#e85050" stroke="#e85050" stroke-width="0.9"/><path d="M1072.6 80 l3.6 -3.4" stroke="#fff" stroke-width="0.8"/><rect x="1103.3" y="69.8" width="5.2" height="7.5" rx="1" fill="#fff" stroke="#3a3a3a" stroke-width="1"/><rect x="1103.3" y="78.8" width="5.2" height="7.8" rx="1" fill="#fff" stroke="#3a3a3a" stroke-width="1"/><path d="M1104.5 74.2 h2.8 M1105.9 72.8 v2.8 M1104.5 82.7 h2.8 M1105.9 81.3 v2.8" stroke="#4a86d4" stroke-width="0.9"/><rect x="1109.8" y="69.2" width="13" height="17.6" rx="1" fill="#fff" stroke="#3a3a3a" stroke-width="1"/><path d="M1109.8 73.6 h13 M1109.8 78 h13 M1109.8 82.4 h13 M1114.2 69.2 v17.6 M1118.5 69.2 v17.6" stroke="#3a3a3a" stroke-width="0.8"/><path d="M47.6 106.2 h3 l-1.5 1.7 z" fill="#333"/><path d="M277.2 106.2 h3 l-1.5 1.7 z" fill="#333"/><path d="M798.5 106.2 h3 l-1.5 1.7 z" fill="#333"/><path d="M986.3 106.2 h3 l-1.5 1.7 z" fill="#333"/><path d="M1046.6000000000001 105.6 h3.2 l-1.6 1.8 z" fill="#333"/><path d="M1077.4 105.6 h3.2 l-1.6 1.8 z" fill="#333"/><path d="M1133 72.3 h2.6 M1134.3 71 v2.6" stroke="#a9a7a5" stroke-width="0.8"/><path d="M1136.5 70.5 h3 M1137.5 72.8 h2 M1137.5 75.2 h2 M1136.5 77.5 h3" stroke="#a9a7a5" stroke-width="0.9"/><rect x="1139.5" y="70" width="2.2" height="8" fill="#a9a7a5"/><path d="M1133 87.8 h2.6" stroke="#a9a7a5" stroke-width="0.8"/><path d="M1136.5 85.5 h5 M1137.5 87.8 h4 M1137.5 90.2 h4 M1136.5 92.5 h5" stroke="#a9a7a5" stroke-width="0.9"/><path d="M1187.8 124.5 v-4 h4" fill="none" stroke="#555" stroke-width="0.8"/><path d="M1189.5 122.2 l2.8 2.5 h-2.8 z" fill="#333"/><path d="M1288.8 124 l2.8 -2.8 l2.8 2.8" fill="none" stroke="#222" stroke-width="1.2"/><path d="M83.3 142.2 h4.4 l-2.2 2.4 z" fill="#333"/><circle cx="102.4" cy="140.6" r="0.75" fill="#eee"/><circle cx="102.4" cy="143.6" r="0.75" fill="#eee"/><circle cx="102.4" cy="146.6" r="0.75" fill="#eee"/><path d="M122.7 141 l5 5 M127.7 141 l-5 5" stroke="#7a7a7a" stroke-width="0.9"/><path d="M145.2 143.5 l2.3 2.6 l4.5 -5" fill="none" stroke="#7a7a7a" stroke-width="1"/><text x="168.6" y="146.3" font-family="Liberation Serif" font-style="italic" font-weight="bold" font-size="8.5" fill="#333">f</text><text x="172.6" y="146.6" font-family="Liberation Serif" font-style="italic" font-size="5.6" fill="#333">x</text><path d="M1289.3 144 l2.5 -2.4 l2.5 2.4" fill="none" stroke="#222" stroke-width="1.1"/></svg>
</body></html>
